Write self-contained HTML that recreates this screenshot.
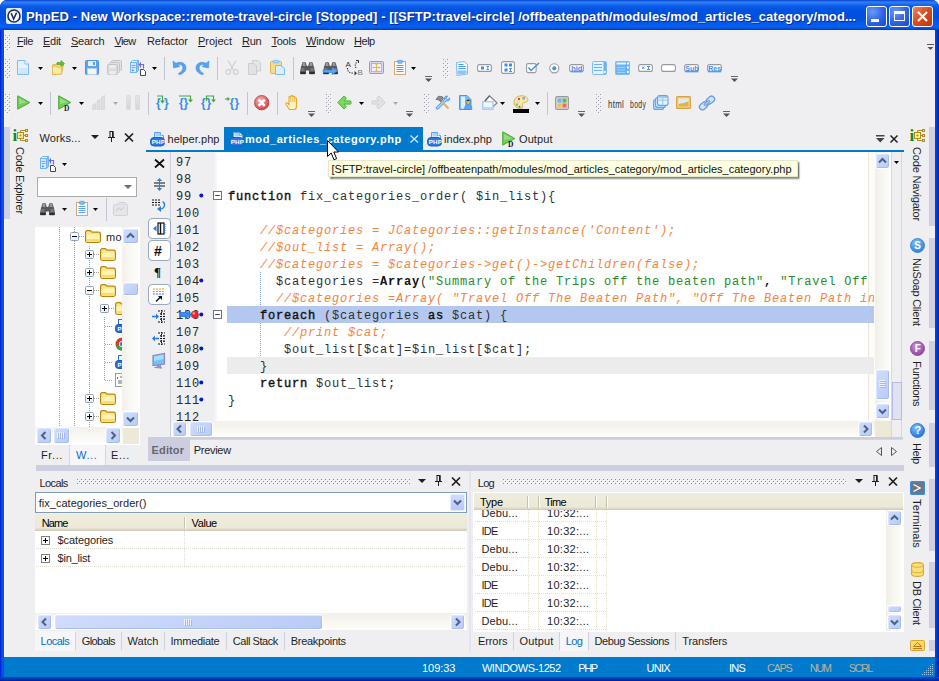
<!DOCTYPE html><html><head><meta charset="utf-8"><title>PhpED</title><style>
*{box-sizing:border-box;margin:0;padding:0}
html,body{width:939px;height:681px;overflow:hidden;background:#fff}
body{position:relative;font-family:"Liberation Sans",sans-serif;font-size:11px;color:#1e1e1e}
.a{position:absolute}
.t{position:absolute;white-space:pre;line-height:14px;height:14px;font-size:11px}
.code{position:absolute;white-space:pre;font-family:"Liberation Mono",monospace;font-size:12px;letter-spacing:.8px;line-height:17px;height:17px;color:#303030;margin-top:2px}
.cm{color:#f4843c;font-style:italic}
.st{color:#2a8a2a}
.kw{font-weight:bold;color:#111}
.k2{color:#111;-webkit-text-stroke:.4px #111}
svg{position:absolute;overflow:visible}
u{text-decoration:underline;text-underline-offset:1px}
</style></head><body>
<div class="a" style="left:0px;top:0px;width:939px;height:681px;background:linear-gradient(90deg,#0019cf 0,#0a50e6 2px,#0855e8 3px,#0048d8 4px,#0048d8 935px,#0040d0 936px,#0034c4 937.5px,#001aa6 939px);border-radius:7px 7px 0 0"></div>
<div class="a" style="left:0px;top:0px;width:939px;height:30px;background:linear-gradient(to bottom,#0840d0 0,#2f80f5 2px,#2a78f2 3px,#0a5ce8 6px,#0052e2 10px,#0050e0 18px,#0458ea 23px,#0860f2 27px,#0048d0 29px,#003cc0 30px);border-radius:7px 7px 0 0"></div>
<div class="a" style="left:4px;top:30px;width:931px;height:648px;background:#efeff2"></div>
<div class="a" style="left:4px;top:30px;width:1px;height:627px;background:#fbf8f2"></div>
<div class="a" style="left:6px;top:8px;width:16px;height:16px;background:#dfe9f7;border-radius:2px"></div>
<svg style="left:6px;top:8px" width="16" height="16" viewBox="0 0 16 16"><circle cx="8" cy="8" r="6" fill="#fff" stroke="#1c2e5a" stroke-width="1.6"/><path d="M5.2 5.2 L7.6 11 L10.6 4.6" fill="none" stroke="#1c2e5a" stroke-width="1.6"/></svg>
<div class="t" style="left:26px;top:9px;color:#fff;line-height:16px;height:16px;text-shadow:1px 1px 0 #0a2a8a;letter-spacing:0.080px;font-weight:bold;font-size:13px">PhpED - New Workspace::remote-travel-circle [Stopped] - [[SFTP:travel-circle] /offbeatenpath/modules/mod_articles_category/mod...</div>
<div class="a" style="left:866px;top:6px;width:21px;height:21px;background:radial-gradient(circle at 30% 25%,#6a98fa 0%,#2f62e6 55%,#1c48cc 100%);border:1px solid #fff;border-radius:3px"></div>
<svg style="left:866px;top:6px" width="21" height="21" viewBox="0 0 21 21"><rect x="5" y="13" width="8" height="3" fill="#fff"/></svg>
<div class="a" style="left:889px;top:6px;width:21px;height:21px;background:radial-gradient(circle at 30% 25%,#6a98fa 0%,#2f62e6 55%,#1c48cc 100%);border:1px solid #fff;border-radius:3px"></div>
<svg style="left:889px;top:6px" width="21" height="21" viewBox="0 0 21 21"><rect x="5.5" y="5.5" width="10" height="9" fill="none" stroke="#fff" stroke-width="1"/><rect x="5" y="5" width="11" height="3" fill="#fff"/></svg>
<div class="a" style="left:912px;top:6px;width:21px;height:21px;background:linear-gradient(135deg,#ee8a6a 0%,#dc4c24 45%,#c03410 100%);border:1px solid #fff;border-radius:3px"></div>
<svg style="left:912px;top:6px" width="21" height="21" viewBox="0 0 21 21"><path d="M6 6 L15 15 M15 6 L6 15" stroke="#fff" stroke-width="2.2" fill="none"/></svg>
<div class="t" style="left:17px;top:34px;;letter-spacing:-0.496px"><u>F</u>ile</div>
<div class="t" style="left:43px;top:34px;;letter-spacing:-0.277px"><u>E</u>dit</div>
<div class="t" style="left:71px;top:34px;;letter-spacing:-0.247px"><u>S</u>earch</div>
<div class="t" style="left:114.5px;top:34px;;letter-spacing:-0.616px"><u>V</u>iew</div>
<div class="t" style="left:147px;top:34px;;letter-spacing:-0.077px">Refactor</div>
<div class="t" style="left:198px;top:34px;;letter-spacing:-0.038px"><u>P</u>roject</div>
<div class="t" style="left:242px;top:34px;;letter-spacing:-0.275px"><u>R</u>un</div>
<div class="t" style="left:271.5px;top:34px;;letter-spacing:-0.264px"><u>T</u>ools</div>
<div class="t" style="left:306px;top:34px;;letter-spacing:-0.114px"><u>W</u>indow</div>
<div class="t" style="left:354px;top:34px;;letter-spacing:-0.464px"><u>H</u>elp</div>
<svg style="left:927px;top:44px" width="7" height="7" viewBox="0 0 7 7"><rect x="0" y="0" width="7" height="1" fill="#555"/><path d="M0.5 3 L6.5 3 L3.5 6 Z" fill="#555"/></svg>
<svg style="left:5px;top:35px" width="6" height="15" viewBox="0 0 6 15"><rect x="1" y="1" width="1" height="1" fill="#fff"/><rect x="5" y="1" width="1" height="1" fill="#fff"/><rect x="0" y="0" width="1" height="1" fill="#9c9ca6"/><rect x="4" y="0" width="1" height="1" fill="#9c9ca6"/><rect x="3" y="3" width="1" height="1" fill="#fff"/><rect x="2" y="2" width="1" height="1" fill="#9c9ca6"/><rect x="1" y="5" width="1" height="1" fill="#fff"/><rect x="5" y="5" width="1" height="1" fill="#fff"/><rect x="0" y="4" width="1" height="1" fill="#9c9ca6"/><rect x="4" y="4" width="1" height="1" fill="#9c9ca6"/><rect x="3" y="7" width="1" height="1" fill="#fff"/><rect x="2" y="6" width="1" height="1" fill="#9c9ca6"/><rect x="1" y="9" width="1" height="1" fill="#fff"/><rect x="5" y="9" width="1" height="1" fill="#fff"/><rect x="0" y="8" width="1" height="1" fill="#9c9ca6"/><rect x="4" y="8" width="1" height="1" fill="#9c9ca6"/><rect x="3" y="11" width="1" height="1" fill="#fff"/><rect x="2" y="10" width="1" height="1" fill="#9c9ca6"/><rect x="1" y="13" width="1" height="1" fill="#fff"/><rect x="5" y="13" width="1" height="1" fill="#fff"/><rect x="0" y="12" width="1" height="1" fill="#9c9ca6"/><rect x="4" y="12" width="1" height="1" fill="#9c9ca6"/><rect x="3" y="15" width="1" height="1" fill="#fff"/><rect x="2" y="14" width="1" height="1" fill="#9c9ca6"/></svg>
<svg style="left:5px;top:59px" width="6" height="19" viewBox="0 0 6 19"><rect x="1" y="1" width="1" height="1" fill="#fff"/><rect x="5" y="1" width="1" height="1" fill="#fff"/><rect x="0" y="0" width="1" height="1" fill="#9c9ca6"/><rect x="4" y="0" width="1" height="1" fill="#9c9ca6"/><rect x="3" y="3" width="1" height="1" fill="#fff"/><rect x="2" y="2" width="1" height="1" fill="#9c9ca6"/><rect x="1" y="5" width="1" height="1" fill="#fff"/><rect x="5" y="5" width="1" height="1" fill="#fff"/><rect x="0" y="4" width="1" height="1" fill="#9c9ca6"/><rect x="4" y="4" width="1" height="1" fill="#9c9ca6"/><rect x="3" y="7" width="1" height="1" fill="#fff"/><rect x="2" y="6" width="1" height="1" fill="#9c9ca6"/><rect x="1" y="9" width="1" height="1" fill="#fff"/><rect x="5" y="9" width="1" height="1" fill="#fff"/><rect x="0" y="8" width="1" height="1" fill="#9c9ca6"/><rect x="4" y="8" width="1" height="1" fill="#9c9ca6"/><rect x="3" y="11" width="1" height="1" fill="#fff"/><rect x="2" y="10" width="1" height="1" fill="#9c9ca6"/><rect x="1" y="13" width="1" height="1" fill="#fff"/><rect x="5" y="13" width="1" height="1" fill="#fff"/><rect x="0" y="12" width="1" height="1" fill="#9c9ca6"/><rect x="4" y="12" width="1" height="1" fill="#9c9ca6"/><rect x="3" y="15" width="1" height="1" fill="#fff"/><rect x="2" y="14" width="1" height="1" fill="#9c9ca6"/><rect x="1" y="17" width="1" height="1" fill="#fff"/><rect x="5" y="17" width="1" height="1" fill="#fff"/><rect x="0" y="16" width="1" height="1" fill="#9c9ca6"/><rect x="4" y="16" width="1" height="1" fill="#9c9ca6"/><rect x="3" y="19" width="1" height="1" fill="#fff"/><rect x="2" y="18" width="1" height="1" fill="#9c9ca6"/></svg>
<svg style="left:5px;top:94px" width="6" height="19" viewBox="0 0 6 19"><rect x="1" y="1" width="1" height="1" fill="#fff"/><rect x="5" y="1" width="1" height="1" fill="#fff"/><rect x="0" y="0" width="1" height="1" fill="#9c9ca6"/><rect x="4" y="0" width="1" height="1" fill="#9c9ca6"/><rect x="3" y="3" width="1" height="1" fill="#fff"/><rect x="2" y="2" width="1" height="1" fill="#9c9ca6"/><rect x="1" y="5" width="1" height="1" fill="#fff"/><rect x="5" y="5" width="1" height="1" fill="#fff"/><rect x="0" y="4" width="1" height="1" fill="#9c9ca6"/><rect x="4" y="4" width="1" height="1" fill="#9c9ca6"/><rect x="3" y="7" width="1" height="1" fill="#fff"/><rect x="2" y="6" width="1" height="1" fill="#9c9ca6"/><rect x="1" y="9" width="1" height="1" fill="#fff"/><rect x="5" y="9" width="1" height="1" fill="#fff"/><rect x="0" y="8" width="1" height="1" fill="#9c9ca6"/><rect x="4" y="8" width="1" height="1" fill="#9c9ca6"/><rect x="3" y="11" width="1" height="1" fill="#fff"/><rect x="2" y="10" width="1" height="1" fill="#9c9ca6"/><rect x="1" y="13" width="1" height="1" fill="#fff"/><rect x="5" y="13" width="1" height="1" fill="#fff"/><rect x="0" y="12" width="1" height="1" fill="#9c9ca6"/><rect x="4" y="12" width="1" height="1" fill="#9c9ca6"/><rect x="3" y="15" width="1" height="1" fill="#fff"/><rect x="2" y="14" width="1" height="1" fill="#9c9ca6"/><rect x="1" y="17" width="1" height="1" fill="#fff"/><rect x="5" y="17" width="1" height="1" fill="#fff"/><rect x="0" y="16" width="1" height="1" fill="#9c9ca6"/><rect x="4" y="16" width="1" height="1" fill="#9c9ca6"/><rect x="3" y="19" width="1" height="1" fill="#fff"/><rect x="2" y="18" width="1" height="1" fill="#9c9ca6"/></svg>
<svg style="left:17px;top:60px" width="12" height="15" viewBox="0 0 12 15"><path d="M0.5 0.5 H8 L11.5 4 V14.5 H0.5 Z" fill="#e4f2ff" stroke="#7dbdf5"/><path d="M8 0.5 V4 H11.5" fill="#fff" stroke="#7dbdf5"/><rect x="1.5" y="8" width="9" height="6" fill="#cfe6fb"/></svg>
<svg style="left:38px;top:67px" width="5" height="3" viewBox="0 0 5 3"><path d="M0 0 L5 0 L2.5 3 Z" fill="#000"/></svg>
<svg style="left:52px;top:60px" width="13" height="15" viewBox="0 0 13 15"><path d="M0.5 5 L9 3 L11.5 4 L9.5 14 L0.5 14.5 Z" fill="#f5d77a" stroke="#d9b145"/><path d="M0.5 6 L9.5 8 L9.5 14 L0.5 14.5Z" fill="#fbe9a6" stroke="#d9b145" stroke-width=".6"/><path d="M5 2.5 H9 V0.5 L12.5 3.5 L9 6.5 V4.5 H5 Z" fill="#5cc040" stroke="#3f9a2a" stroke-width=".6"/></svg>
<svg style="left:72px;top:67px" width="5" height="3" viewBox="0 0 5 3"><path d="M0 0 L5 0 L2.5 3 Z" fill="#000"/></svg>
<svg style="left:85px;top:60px" width="14" height="15" viewBox="0 0 14 15"><rect x="0.5" y="0.5" width="13" height="14" rx="1" fill="#5aa2f2" stroke="#4a92ea"/><rect x="3" y="1" width="8" height="5" fill="#e4f0ff"/><rect x="8" y="2" width="2" height="3" fill="#5aa2f2"/><rect x="2.5" y="8.5" width="9" height="6" fill="#f4f4f4" stroke="#cfd8e6" stroke-width=".5"/></svg>
<svg style="left:107px;top:60px" width="15" height="15" viewBox="0 0 15 15"><rect x="4.5" y="0.5" width="10" height="10" rx="1" fill="#e2e2e4" stroke="#c4c4c8"/><rect x="2.5" y="2.5" width="10" height="10" rx="1" fill="#e2e2e4" stroke="#c4c4c8"/><rect x="0.5" y="4.5" width="10" height="10" rx="1" fill="#dadadd" stroke="#c4c4c8"/><rect x="2.5" y="5" width="6" height="3.5" fill="#ececee"/><rect x="2.5" y="11" width="6" height="3.5" fill="#ececee"/></svg>
<svg style="left:130px;top:60px" width="16" height="16" viewBox="0 0 16 16"><path d="M0.5 2.5 L2.5 0.5 H8.5 L6.5 2.5 Z" fill="#f2f9ff" stroke="#6ab0f0" stroke-width=".9"/><path d="M6.5 2.5 L8.5 0.5 V10.5 L6.5 12.5 Z" fill="#8cc4f6" stroke="#6ab0f0" stroke-width=".9"/><rect x="0.5" y="2.5" width="6" height="10" fill="#d4eaff" stroke="#6ab0f0" stroke-width=".9"/><path d="M1.5 5.5 H5.5 M1.5 7.5 H5.5" stroke="#6ab0f0" stroke-width="1"/><rect x="2" y="9.5" width="1.6" height="1.6" fill="#3a8ee6"/><path d="M10.5 7.5 V4.5 H13.5 V8.5" fill="none" stroke="#7a6ad0" stroke-width="1.2"/><path d="M11 1.8 L8.6 4.5 L11 7.2 Z" fill="#7a6ad0"/><path d="M10.5 9.5 H13.5 L15.5 11.5 V15.5 H10.5 Z" fill="#fff" stroke="#445"/></svg>
<svg style="left:152px;top:67px" width="5" height="3" viewBox="0 0 5 3"><path d="M0 0 L5 0 L2.5 3 Z" fill="#000"/></svg>
<div class="a" style="left:164px;top:57px;width:1px;height:23px;background:#c3c3d4"></div>
<svg style="left:172px;top:60px" width="15" height="15" viewBox="0 0 15 15"><g ><path d="M1 1 L1.5 8 L8 6.5 L5.8 5 C8.5 3.8 11 5.5 10.8 8.2 C10.6 10.5 9 12.2 6.2 13.6 L7.6 14.8 C11.5 13.6 14.2 11 14 7.6 C13.8 3.4 9.2 0.6 4 3.2 Z" fill="#55a2ee" stroke="#3a8ae0" stroke-width=".5"/></g></svg>
<svg style="left:195px;top:60px" width="15" height="15" viewBox="0 0 15 15"><g transform="translate(15,0) scale(-1,1)"><path d="M1 1 L1.5 8 L8 6.5 L5.8 5 C8.5 3.8 11 5.5 10.8 8.2 C10.6 10.5 9 12.2 6.2 13.6 L7.6 14.8 C11.5 13.6 14.2 11 14 7.6 C13.8 3.4 9.2 0.6 4 3.2 Z" fill="#55a2ee" stroke="#3a8ae0" stroke-width=".5"/></g></svg>
<div class="a" style="left:217px;top:57px;width:1px;height:23px;background:#c3c3d4"></div>
<svg style="left:225px;top:60px" width="14" height="15" viewBox="0 0 14 15"><path d="M3 0.5 L8.5 10 M11 0.5 L5.5 10" stroke="#d0d0d4" stroke-width="1.3" fill="none"/><circle cx="3.2" cy="12" r="2.3" fill="none" stroke="#d0d0d4" stroke-width="1.2"/><circle cx="10.8" cy="12" r="2.3" fill="none" stroke="#d0d0d4" stroke-width="1.2"/></svg>
<svg style="left:248px;top:60px" width="14" height="15" viewBox="0 0 14 15"><path d="M4.5 0.5 H10 L12.5 3 V11 H4.5 Z" fill="#e6e6e8" stroke="#cdcdd0"/><path d="M0.5 3.5 H6 L8.5 6 V14.5 H0.5 Z" fill="#e2e2e5" stroke="#cdcdd0"/></svg>
<svg style="left:270px;top:60px" width="15" height="15" viewBox="0 0 15 15"><rect x="0.5" y="1.5" width="11" height="12" rx="1" fill="#f7dc8c" stroke="#dcb24c"/><rect x="3" y="0.3" width="6" height="2.6" rx="1" fill="#a8d4ff" stroke="#7dbdf5" stroke-width=".8"/><path d="M5.5 5.5 H11 L14.5 8.5 V14.5 H5.5 Z" fill="#dcedff" stroke="#7dbdf5"/></svg>
<div class="a" style="left:293px;top:57px;width:1px;height:23px;background:#c3c3d4"></div>
<svg style="left:300px;top:61px" width="15" height="14" viewBox="0 0 15 14"><path d="M1 6 L2.6 1.2 H5.6 L6.8 5 H8.2 L9.4 1.2 H12.4 L14 6 L15 11 V13 H9 V9.5 H6 V13 H0 V11 Z" fill="#58585c"/><path d="M3 2 H5 L5.5 5 H2.5Z M10 2 H12 L12.5 5 H9.5 Z" fill="#9c9ca0"/><path d="M1.5 7 H4.5 V10 H1 Z M10.5 7 H13.5 L14 10 H10.5 Z" fill="#77777b"/><rect x="0.5" y="11" width="5" height="2.2" fill="#2e2e30"/><rect x="9.5" y="11" width="5" height="2.2" fill="#2e2e30"/></svg>
<svg style="left:323px;top:61px" width="15" height="14" viewBox="0 0 15 14"><path d="M1 6 L2.6 1.2 H5.6 L6.8 5 H8.2 L9.4 1.2 H12.4 L14 6 L15 11 V13 H9 V9.5 H6 V13 H0 V11 Z" fill="#58585c"/><path d="M3 2 H5 L5.5 5 H2.5Z M10 2 H12 L12.5 5 H9.5 Z" fill="#9c9ca0"/><path d="M1.5 7 H4.5 V10 H1 Z M10.5 7 H13.5 L14 10 H10.5 Z" fill="#77777b"/><rect x="0.5" y="11" width="5" height="2.2" fill="#2e2e30"/><rect x="9.5" y="11" width="5" height="2.2" fill="#2e2e30"/><path d="M0 9 H9 V6.5 L15 10 L9 13.5 V11.5 H0 Z" fill="#59a7f2" stroke="#2f80dc" stroke-width=".6"/></svg>
<svg style="left:345px;top:60px" width="18" height="16" viewBox="0 0 18 16"><text x="0.5" y="6.5" font-family="Liberation Sans,sans-serif" font-size="8" fill="#333">A</text><text x="12.5" y="15" font-family="Liberation Sans,sans-serif" font-size="8" fill="#777">B</text><path d="M2.5 8 C2.5 12 5 13.2 9 13.2" fill="none" stroke="#333" stroke-width="1.2" stroke-dasharray="1.2 1.2"/><path d="M9.5 11 L12 13.2 L9.5 15.4 Z" fill="#333"/><path d="M11 8 C9.5 5 10.5 3 12.5 1.5" fill="none" stroke="#333" stroke-width="1.1" stroke-dasharray="1.2 1.2"/><path d="M11 0.5 H13.5 V3" fill="none" stroke="#333" stroke-width="1"/></svg>
<svg style="left:369px;top:61px" width="15" height="13" viewBox="0 0 15 13"><rect x="0.5" y="0.5" width="14" height="12" rx="1" fill="#d9d6ee" stroke="#9d96c8"/><rect x="2.5" y="2.5" width="10" height="8" fill="#f0f0ff" stroke="#aca6d4" stroke-width=".8"/><path d="M7.5 3 V10 M4 6.5 H11" stroke="#e8b93c" stroke-width="1.2"/><path d="M7.5 2.4 L6.2 4 H8.8Z M7.5 10.6 L6.2 9 H8.8Z M3.4 6.5 L5 5.2 V7.8Z M11.6 6.5 L10 5.2 V7.8Z" fill="#e8b93c"/></svg>
<svg style="left:394px;top:60px" width="12" height="15" viewBox="0 0 12 15"><rect x="0.5" y="1.5" width="11" height="13" fill="#f8fbff" stroke="#d6a878"/><path d="M2.5 5.5 H9.5 M2.5 7.5 H9.5 M2.5 9.5 H9.5 M2.5 11.5 H9.5" stroke="#5aa2ea" stroke-width="1"/><rect x="3.5" y="0.3" width="5" height="3" rx="1.2" fill="#7dbdf5" stroke="#4a96e6" stroke-width=".7"/></svg>
<svg style="left:411px;top:67px" width="5" height="3" viewBox="0 0 5 3"><path d="M0 0 L5 0 L2.5 3 Z" fill="#000"/></svg>
<svg style="left:425px;top:76px" width="7" height="7" viewBox="0 0 7 7"><rect x="0" y="0" width="7" height="1" fill="#666"/><path d="M0 2.5 L7 2.5 L3.5 6 Z" fill="#555"/></svg>
<svg style="left:443px;top:59px" width="6" height="19" viewBox="0 0 6 19"><rect x="1" y="1" width="1" height="1" fill="#fff"/><rect x="5" y="1" width="1" height="1" fill="#fff"/><rect x="0" y="0" width="1" height="1" fill="#9c9ca6"/><rect x="4" y="0" width="1" height="1" fill="#9c9ca6"/><rect x="3" y="3" width="1" height="1" fill="#fff"/><rect x="2" y="2" width="1" height="1" fill="#9c9ca6"/><rect x="1" y="5" width="1" height="1" fill="#fff"/><rect x="5" y="5" width="1" height="1" fill="#fff"/><rect x="0" y="4" width="1" height="1" fill="#9c9ca6"/><rect x="4" y="4" width="1" height="1" fill="#9c9ca6"/><rect x="3" y="7" width="1" height="1" fill="#fff"/><rect x="2" y="6" width="1" height="1" fill="#9c9ca6"/><rect x="1" y="9" width="1" height="1" fill="#fff"/><rect x="5" y="9" width="1" height="1" fill="#fff"/><rect x="0" y="8" width="1" height="1" fill="#9c9ca6"/><rect x="4" y="8" width="1" height="1" fill="#9c9ca6"/><rect x="3" y="11" width="1" height="1" fill="#fff"/><rect x="2" y="10" width="1" height="1" fill="#9c9ca6"/><rect x="1" y="13" width="1" height="1" fill="#fff"/><rect x="5" y="13" width="1" height="1" fill="#fff"/><rect x="0" y="12" width="1" height="1" fill="#9c9ca6"/><rect x="4" y="12" width="1" height="1" fill="#9c9ca6"/><rect x="3" y="15" width="1" height="1" fill="#fff"/><rect x="2" y="14" width="1" height="1" fill="#9c9ca6"/><rect x="1" y="17" width="1" height="1" fill="#fff"/><rect x="5" y="17" width="1" height="1" fill="#fff"/><rect x="0" y="16" width="1" height="1" fill="#9c9ca6"/><rect x="4" y="16" width="1" height="1" fill="#9c9ca6"/><rect x="3" y="19" width="1" height="1" fill="#fff"/><rect x="2" y="18" width="1" height="1" fill="#9c9ca6"/></svg>
<svg style="left:456px;top:61px" width="12" height="15" viewBox="0 0 12 15"><path d="M0.5 1.5 L8 0.5 L11.5 3.5 V13 L1 14.5 Z" fill="#f2f9ff" stroke="#7dbdf5"/><path d="M2.5 3.5 H7.5 M2.5 5.5 H9.5 M2.5 7.5 H9.5" stroke="#4a9aea" stroke-width="1"/><path d="M1.5 9.5 H10.5 V12.6 L1.8 13.6 Z" fill="#8cc4f6"/></svg>
<svg style="left:477px;top:64px" width="15" height="8" viewBox="0 0 15 8"><rect x="0.6" y="0.6" width="13.8" height="6.8" rx="2" fill="#fff" stroke="#9a9a9e" stroke-width="1.1"/><rect x="4" y="2.5" width="3" height="3" fill="#3a8ee6"/><path d="M9.5 2.5 H12 M10.75 2.5 V5.5 M9.5 5.5 H12" stroke="#3a8ee6" stroke-width=".9" fill="none"/></svg>
<svg style="left:501px;top:61px" width="14" height="13" viewBox="0 0 14 13"><rect x="0.6" y="0.6" width="12.8" height="11.8" rx="2" fill="#fff" stroke="#9a9a9e" stroke-width="1.1"/><rect x="3.5" y="2.5" width="3" height="3" fill="#3a8ee6"/><rect x="8" y="2.5" width="3" height="3" fill="#3a8ee6"/><rect x="3.5" y="7.5" width="3" height="3" fill="#3a8ee6"/><path d="M8 7.5 H11 M9.5 7.5 V10.5 M8 10.5 H11" stroke="#3a8ee6" stroke-width=".9"/></svg>
<svg style="left:526px;top:62px" width="14" height="12" viewBox="0 0 14 12"><rect x="0.6" y="1.6" width="9.5" height="9" rx="1.5" fill="#fff" stroke="#9a9a9e" stroke-width="1.1"/><path d="M2.5 5.5 L5 8.5 L13 1" fill="none" stroke="#3a8ee6" stroke-width="1.4"/></svg>
<svg style="left:549px;top:63px" width="11" height="11" viewBox="0 0 11 11"><circle cx="5.3" cy="5.3" r="4.6" fill="#fff" stroke="#9a9a9e" stroke-width="1.1"/><circle cx="5.3" cy="5.3" r="2" fill="#3a8ee6"/></svg>
<svg style="left:569px;top:64px" width="15" height="8" viewBox="0 0 15 8"><rect x="0.6" y="0.6" width="13.8" height="6.8" rx="2" fill="#fff" stroke="#9a9a9e" stroke-width="1.1"/><text x="2.2" y="6.6" font-family="Liberation Sans,sans-serif" font-size="7.5" font-weight="bold" fill="#3a8ee6" text-decoration="underline">hid</text></svg>
<svg style="left:592px;top:61px" width="15" height="14" viewBox="0 0 15 14"><rect x="0.5" y="0.5" width="14" height="13" rx="1" fill="#e4f2ff" stroke="#7dbdf5"/><path d="M2 3.5 H10 M2 6.5 H10 M2 9.5 H10" stroke="#6ab2f2" stroke-width="1.2"/><rect x="11.5" y="1" width="2.5" height="12" fill="#6ab2f2"/><rect x="12" y="10" width="1.6" height="2" fill="#fff"/></svg>
<svg style="left:615px;top:61px" width="15" height="14" viewBox="0 0 15 14"><rect x="0.5" y="0.5" width="14" height="13" rx="1" fill="#6ab4f5" stroke="#7dbdf5"/><rect x="1.5" y="1.5" width="9.5" height="2" fill="#e4f2ff"/><path d="M2 6.5 H10 M2 9 H10 M2 11.5 H10" stroke="#9fd0fa" stroke-width="1"/><rect x="12" y="1.5" width="1.8" height="2" fill="#fff"/><rect x="12" y="5.5" width="1.8" height="2" fill="#fff"/><rect x="12" y="10" width="1.8" height="2" fill="#fff"/></svg>
<svg style="left:638px;top:64px" width="15" height="8" viewBox="0 0 15 8"><rect x="0.6" y="0.6" width="13.8" height="6.8" rx="2" fill="#fff" stroke="#9a9a9e" stroke-width="1.1"/><path d="M4 2.5 L6.4 5 M6.4 2.5 L4 5" stroke="#3a8ee6" stroke-width=".9"/><path d="M9 2.5 H12 M10.5 2.5 V5.5 M9 5.5 H12" stroke="#3a8ee6" stroke-width=".9" fill="none"/></svg>
<svg style="left:661px;top:64px" width="15" height="8" viewBox="0 0 15 8"><rect x="0.6" y="0.6" width="13.8" height="6.8" rx="2" fill="#fff" stroke="#9a9a9e" stroke-width="1.1"/></svg>
<svg style="left:684px;top:64px" width="15" height="8" viewBox="0 0 15 8"><rect x="0.6" y="0.6" width="13.8" height="6.8" rx="2" fill="#fff" stroke="#9a9a9e" stroke-width="1.1"/><text x="1.3" y="6.6" font-family="Liberation Sans,sans-serif" font-size="7" font-weight="bold" fill="#3a8ee6" text-decoration="underline">Sub</text></svg>
<svg style="left:707px;top:64px" width="15" height="8" viewBox="0 0 15 8"><rect x="0.6" y="0.6" width="13.8" height="6.8" rx="2" fill="#fff" stroke="#9a9a9e" stroke-width="1.1"/><text x="1.3" y="6.6" font-family="Liberation Sans,sans-serif" font-size="7" font-weight="bold" fill="#3a8ee6" text-decoration="underline">Res</text></svg>
<svg style="left:731px;top:76px" width="7" height="7" viewBox="0 0 7 7"><rect x="0" y="0" width="7" height="1" fill="#666"/><path d="M0 2.5 L7 2.5 L3.5 6 Z" fill="#555"/></svg>
<svg style="left:17px;top:95px" width="14" height="15" viewBox="0 0 14 15"><path d="M0.7 0.8 L12.8 7.5 L0.7 14.2 Z" fill="#6fcf57" stroke="#49aa36" stroke-width="1"/><path d="M2 3 L9.8 7.3 L2 9 Z" fill="#a6e294" opacity=".7"/></svg>
<svg style="left:38px;top:102px" width="5" height="3" viewBox="0 0 5 3"><path d="M0 0 L5 0 L2.5 3 Z" fill="#000"/></svg>
<div class="a" style="left:50px;top:92px;width:1px;height:23px;background:#c3c3d4"></div>
<svg style="left:58px;top:95px" width="14" height="15" viewBox="0 0 14 15"><path d="M0.7 0.8 L12.8 7.5 L0.7 14.2 Z" fill="#6fcf57" stroke="#49aa36" stroke-width="1"/><path d="M2 3 L9.8 7.3 L2 9 Z" fill="#a6e294" opacity=".7"/><text x="6" y="15.5" font-family="Liberation Serif,serif" font-weight="bold" font-size="7.5" fill="#222">D</text></svg>
<svg style="left:79px;top:102px" width="5" height="3" viewBox="0 0 5 3"><path d="M0 0 L5 0 L2.5 3 Z" fill="#000"/></svg>
<svg style="left:92px;top:95px" width="14" height="15" viewBox="0 0 14 15"><path d="M0.5 10 L3.5 8.5 V14.5 H0.5Z M5 6 L8 4.5 V14.5 H5Z M9.5 2 L12.5 0.5 V14.5 H9.5 Z" fill="#dedee0" stroke="#cfcfd3" stroke-width=".6"/></svg>
<svg style="left:113px;top:102px" width="5" height="3" viewBox="0 0 5 3"><path d="M0 0 L5 0 L2.5 3 Z" fill="#a8a8ac"/></svg>
<div class="a" style="left:126px;top:95px;width:5px;height:15px;background:linear-gradient(#e4e4e6,#d6d6d9);border:1px solid #dcdcdf;border-radius:1px"></div>
<div class="a" style="left:135px;top:95px;width:5px;height:15px;background:linear-gradient(#e4e4e6,#d6d6d9);border:1px solid #dcdcdf;border-radius:1px"></div>
<div class="a" style="left:148px;top:92px;width:1px;height:23px;background:#c3c3d4"></div>
<svg style="left:156px;top:95px" width="16" height="15" viewBox="0 0 16 15"><text x="0" y="12" font-family="Liberation Sans,sans-serif" font-size="12" font-weight="bold" fill="#3a8ee6">{</text><text x="8" y="12" font-family="Liberation Sans,sans-serif" font-size="12" font-weight="bold" fill="#3a8ee6">}</text><path d="M1 1 H6.5 V6" fill="none" stroke="#49a83a" stroke-width="1.2"/><path d="M4 5.5 H9 L6.5 8.5 Z" fill="#49a83a"/></svg>
<svg style="left:179px;top:95px" width="16" height="15" viewBox="0 0 16 15"><text x="0" y="12" font-family="Liberation Sans,sans-serif" font-size="12" font-weight="bold" fill="#3a8ee6">{</text><text x="4.5" y="12" font-family="Liberation Sans,sans-serif" font-size="12" font-weight="bold" fill="#3a8ee6">}</text><path d="M0 1 H11.5 V5" fill="none" stroke="#49a83a" stroke-width="1.2"/><path d="M9 4.5 H14 L11.5 7.5 Z" fill="#49a83a"/></svg>
<svg style="left:201px;top:95px" width="16" height="15" viewBox="0 0 16 15"><text x="0" y="12" font-family="Liberation Sans,sans-serif" font-size="12" font-weight="bold" fill="#3a8ee6">{</text><text x="5.5" y="12" font-family="Liberation Sans,sans-serif" font-size="12" font-weight="bold" fill="#3a8ee6">}</text><path d="M5.5 6 V1 H12.5 V5" fill="none" stroke="#49a83a" stroke-width="1.2"/><path d="M10 4.5 H15 L12.5 7.5 Z" fill="#49a83a"/></svg>
<svg style="left:225px;top:95px" width="16" height="15" viewBox="0 0 16 15"><text x="4.5" y="12" font-family="Liberation Sans,sans-serif" font-size="12" font-weight="bold" fill="#3a8ee6">{</text><text x="9.5" y="12" font-family="Liberation Sans,sans-serif" font-size="12" font-weight="bold" fill="#3a8ee6">}</text><path d="M0 4 H3" stroke="#49a83a" stroke-width="1.2"/><path d="M2.5 1.8 L5 4 L2.5 6.2 Z" fill="#49a83a"/></svg>
<div class="a" style="left:247px;top:92px;width:1px;height:23px;background:#c3c3d4"></div>
<svg style="left:254px;top:95px" width="16" height="16" viewBox="0 0 16 16"><defs><radialGradient id="rg1" cx=".4" cy=".35" r=".7"><stop offset="0" stop-color="#f8b8b8"/><stop offset="1" stop-color="#cc3c44"/></radialGradient></defs><circle cx="7.7" cy="7.7" r="7.2" fill="url(#rg1)" stroke="#b83a40" stroke-width=".8"/><path d="M4.6 4.6 L10.8 10.8 M10.8 4.6 L4.6 10.8" stroke="#fff" stroke-width="2.6"/></svg>
<div class="a" style="left:277px;top:92px;width:1px;height:23px;background:#c3c3d4"></div>
<svg style="left:285px;top:95px" width="14" height="15" viewBox="0 0 14 15"><path d="M4.5 14.5 L1 9.5 C0 8 1.5 7.2 2.6 8.2 L4 9.6 V2.4 C4 1.2 5.8 1.2 5.8 2.4 V1.4 C5.8 0.2 7.8 0.2 7.8 1.4 V2 C7.8 0.9 9.7 0.9 9.7 2 V3.4 C9.7 2.4 11.5 2.4 11.5 3.6 V11 C11.5 13 10.5 14.5 9.5 14.5 Z" fill="#fff3c4" stroke="#e2a82c" stroke-width="1.1"/><path d="M5.8 2.4 V7 M7.8 2 V7 M9.7 3.4 V7" stroke="#e2a82c" stroke-width=".8"/></svg>
<svg style="left:308px;top:111px" width="7" height="7" viewBox="0 0 7 7"><rect x="0" y="0" width="7" height="1" fill="#666"/><path d="M0 2.5 L7 2.5 L3.5 6 Z" fill="#555"/></svg>
<svg style="left:326px;top:94px" width="6" height="19" viewBox="0 0 6 19"><rect x="1" y="1" width="1" height="1" fill="#fff"/><rect x="5" y="1" width="1" height="1" fill="#fff"/><rect x="0" y="0" width="1" height="1" fill="#9c9ca6"/><rect x="4" y="0" width="1" height="1" fill="#9c9ca6"/><rect x="3" y="3" width="1" height="1" fill="#fff"/><rect x="2" y="2" width="1" height="1" fill="#9c9ca6"/><rect x="1" y="5" width="1" height="1" fill="#fff"/><rect x="5" y="5" width="1" height="1" fill="#fff"/><rect x="0" y="4" width="1" height="1" fill="#9c9ca6"/><rect x="4" y="4" width="1" height="1" fill="#9c9ca6"/><rect x="3" y="7" width="1" height="1" fill="#fff"/><rect x="2" y="6" width="1" height="1" fill="#9c9ca6"/><rect x="1" y="9" width="1" height="1" fill="#fff"/><rect x="5" y="9" width="1" height="1" fill="#fff"/><rect x="0" y="8" width="1" height="1" fill="#9c9ca6"/><rect x="4" y="8" width="1" height="1" fill="#9c9ca6"/><rect x="3" y="11" width="1" height="1" fill="#fff"/><rect x="2" y="10" width="1" height="1" fill="#9c9ca6"/><rect x="1" y="13" width="1" height="1" fill="#fff"/><rect x="5" y="13" width="1" height="1" fill="#fff"/><rect x="0" y="12" width="1" height="1" fill="#9c9ca6"/><rect x="4" y="12" width="1" height="1" fill="#9c9ca6"/><rect x="3" y="15" width="1" height="1" fill="#fff"/><rect x="2" y="14" width="1" height="1" fill="#9c9ca6"/><rect x="1" y="17" width="1" height="1" fill="#fff"/><rect x="5" y="17" width="1" height="1" fill="#fff"/><rect x="0" y="16" width="1" height="1" fill="#9c9ca6"/><rect x="4" y="16" width="1" height="1" fill="#9c9ca6"/><rect x="3" y="19" width="1" height="1" fill="#fff"/><rect x="2" y="18" width="1" height="1" fill="#9c9ca6"/></svg>
<svg style="left:337px;top:95px" width="15" height="15" viewBox="0 0 15 15"><g ><path d="M0.8 7.5 L7 1 L9.4 3.2 L7 5.9 H13.2 C14.6 5.9 14.6 9.1 13.2 9.1 H7 L9.4 11.8 L7 14 Z" fill="#7ad95e" stroke="#4cb436" stroke-width="1" stroke-linejoin="round"/></g></svg>
<svg style="left:359px;top:102px" width="5" height="3" viewBox="0 0 5 3"><path d="M0 0 L5 0 L2.5 3 Z" fill="#000"/></svg>
<svg style="left:371px;top:95px" width="15" height="15" viewBox="0 0 15 15"><g transform="translate(15,0) scale(-1,1)"><path d="M0.8 7.5 L7 1 L9.4 3.2 L7 5.9 H13.2 C14.6 5.9 14.6 9.1 13.2 9.1 H7 L9.4 11.8 L7 14 Z" fill="#e2e2e4" stroke="#d0d0d4" stroke-width="1" stroke-linejoin="round"/></g></svg>
<svg style="left:393px;top:102px" width="5" height="3" viewBox="0 0 5 3"><path d="M0 0 L5 0 L2.5 3 Z" fill="#a8a8ac"/></svg>
<svg style="left:406px;top:111px" width="7" height="7" viewBox="0 0 7 7"><rect x="0" y="0" width="7" height="1" fill="#666"/><path d="M0 2.5 L7 2.5 L3.5 6 Z" fill="#555"/></svg>
<svg style="left:424px;top:94px" width="6" height="19" viewBox="0 0 6 19"><rect x="1" y="1" width="1" height="1" fill="#fff"/><rect x="5" y="1" width="1" height="1" fill="#fff"/><rect x="0" y="0" width="1" height="1" fill="#9c9ca6"/><rect x="4" y="0" width="1" height="1" fill="#9c9ca6"/><rect x="3" y="3" width="1" height="1" fill="#fff"/><rect x="2" y="2" width="1" height="1" fill="#9c9ca6"/><rect x="1" y="5" width="1" height="1" fill="#fff"/><rect x="5" y="5" width="1" height="1" fill="#fff"/><rect x="0" y="4" width="1" height="1" fill="#9c9ca6"/><rect x="4" y="4" width="1" height="1" fill="#9c9ca6"/><rect x="3" y="7" width="1" height="1" fill="#fff"/><rect x="2" y="6" width="1" height="1" fill="#9c9ca6"/><rect x="1" y="9" width="1" height="1" fill="#fff"/><rect x="5" y="9" width="1" height="1" fill="#fff"/><rect x="0" y="8" width="1" height="1" fill="#9c9ca6"/><rect x="4" y="8" width="1" height="1" fill="#9c9ca6"/><rect x="3" y="11" width="1" height="1" fill="#fff"/><rect x="2" y="10" width="1" height="1" fill="#9c9ca6"/><rect x="1" y="13" width="1" height="1" fill="#fff"/><rect x="5" y="13" width="1" height="1" fill="#fff"/><rect x="0" y="12" width="1" height="1" fill="#9c9ca6"/><rect x="4" y="12" width="1" height="1" fill="#9c9ca6"/><rect x="3" y="15" width="1" height="1" fill="#fff"/><rect x="2" y="14" width="1" height="1" fill="#9c9ca6"/><rect x="1" y="17" width="1" height="1" fill="#fff"/><rect x="5" y="17" width="1" height="1" fill="#fff"/><rect x="0" y="16" width="1" height="1" fill="#9c9ca6"/><rect x="4" y="16" width="1" height="1" fill="#9c9ca6"/><rect x="3" y="19" width="1" height="1" fill="#fff"/><rect x="2" y="18" width="1" height="1" fill="#9c9ca6"/></svg>
<svg style="left:435px;top:95px" width="16" height="16" viewBox="0 0 16 16"><path d="M12.5 1 C10.5 0.6 9 2.4 9.8 4.2 L1.4 12.2 C0.4 13.2 2 15 3.2 14 L11.4 5.8 C13.4 6.6 15.2 5 14.6 3 L12.6 4.8 L11 3.2 Z" fill="#9fd0ff" stroke="#3a8ee6" stroke-width=".9"/><path d="M4 4 L13.5 13.5" stroke="#e8b060" stroke-width="2.2"/><path d="M1 4.5 L3.5 1.2 L7.5 1.8 L8.5 4 L5.5 6.8 L4.6 5 Z" fill="#8c8c90" stroke="#5a5a5e" stroke-width=".7"/></svg>
<svg style="left:459px;top:95px" width="14" height="15" viewBox="0 0 14 15"><path d="M0.5 0.5 H8 L12 4.5 V14.5 H0.5 Z" fill="#7dbdf5" stroke="#4a9ae8"/><rect x="2" y="1.5" width="4" height="12" fill="#dff0ff"/><circle cx="9.2" cy="7" r="2.2" fill="#f2c46a" stroke="#444" stroke-width=".5"/><path d="M8 4.8 H10.4 V6.2 H8Z" fill="#333"/><path d="M5.5 14.5 C5.5 10.5 7.5 9.5 9.2 9.5 C11 9.5 13 10.5 13 14.5 Z" fill="#5aa6f0" stroke="#3a86da" stroke-width=".6"/></svg>
<svg style="left:482px;top:95px" width="16" height="15" viewBox="0 0 16 15"><path d="M7.5 0.8 L15 8 L9.5 13 L3 6 Z" fill="#fff" stroke="#8a8a8e" stroke-width="1.3"/><path d="M7.5 0.8 L3 6" stroke="#666" stroke-width="1.2"/><path d="M0.8 6.8 H11 V14.2 H0.8 Z" fill="#eef6ff" stroke="#8fc2f2" stroke-width="1.1"/><path d="M1.5 12 H10.5 V13.8 H1.5Z" fill="#b8d8f8"/></svg>
<svg style="left:500px;top:102px" width="5" height="3" viewBox="0 0 5 3"><path d="M0 0 L5 0 L2.5 3 Z" fill="#000"/></svg>
<svg style="left:513px;top:95px" width="16" height="18" viewBox="0 0 16 18"><path d="M8 0.8 C12.5 0.4 15.4 3 14.8 5.6 C14.2 8 10.5 6.6 9.4 8.6 C8.6 10.2 10.8 11.6 9 13 C6.6 14.6 1 12.6 1 7.4 C1 3.6 4 1.2 8 0.8 Z" fill="#fbeaa6" stroke="#dcb040" stroke-width="1"/><rect x="5" y="3" width="2" height="2" fill="#e04040"/><rect x="9.4" y="2" width="2.6" height="2.6" fill="#6ab4f5"/><rect x="2.8" y="8.6" width="2" height="2" fill="#5cc050"/><rect x="5.6" y="10.8" width="1.8" height="1.8" fill="#666"/><circle cx="5.4" cy="7" r="1" fill="#fff" stroke="#999" stroke-width=".4"/><rect x="0" y="14" width="16" height="4" fill="#000"/></svg>
<svg style="left:535px;top:102px" width="5" height="3" viewBox="0 0 5 3"><path d="M0 0 L5 0 L2.5 3 Z" fill="#000"/></svg>
<div class="a" style="left:547px;top:92px;width:1px;height:23px;background:#c3c3d4"></div>
<svg style="left:555px;top:96px" width="14" height="14" viewBox="0 0 14 14"><rect x="0.6" y="0.6" width="12.8" height="12.8" rx="1.5" fill="#d8d8da" stroke="#98989c" stroke-width="1.1"/><rect x="2.5" y="2.5" width="4" height="4" fill="#6cb6f2"/><rect x="7.5" y="2.5" width="4" height="4" fill="#58c058"/><rect x="2.5" y="7.5" width="4" height="4" fill="#f0c050"/><rect x="7.5" y="7.5" width="4" height="4" fill="#f07048"/></svg>
<svg style="left:578px;top:111px" width="7" height="7" viewBox="0 0 7 7"><rect x="0" y="0" width="7" height="1" fill="#666"/><path d="M0 2.5 L7 2.5 L3.5 6 Z" fill="#555"/></svg>
<svg style="left:596px;top:94px" width="6" height="19" viewBox="0 0 6 19"><rect x="1" y="1" width="1" height="1" fill="#fff"/><rect x="5" y="1" width="1" height="1" fill="#fff"/><rect x="0" y="0" width="1" height="1" fill="#9c9ca6"/><rect x="4" y="0" width="1" height="1" fill="#9c9ca6"/><rect x="3" y="3" width="1" height="1" fill="#fff"/><rect x="2" y="2" width="1" height="1" fill="#9c9ca6"/><rect x="1" y="5" width="1" height="1" fill="#fff"/><rect x="5" y="5" width="1" height="1" fill="#fff"/><rect x="0" y="4" width="1" height="1" fill="#9c9ca6"/><rect x="4" y="4" width="1" height="1" fill="#9c9ca6"/><rect x="3" y="7" width="1" height="1" fill="#fff"/><rect x="2" y="6" width="1" height="1" fill="#9c9ca6"/><rect x="1" y="9" width="1" height="1" fill="#fff"/><rect x="5" y="9" width="1" height="1" fill="#fff"/><rect x="0" y="8" width="1" height="1" fill="#9c9ca6"/><rect x="4" y="8" width="1" height="1" fill="#9c9ca6"/><rect x="3" y="11" width="1" height="1" fill="#fff"/><rect x="2" y="10" width="1" height="1" fill="#9c9ca6"/><rect x="1" y="13" width="1" height="1" fill="#fff"/><rect x="5" y="13" width="1" height="1" fill="#fff"/><rect x="0" y="12" width="1" height="1" fill="#9c9ca6"/><rect x="4" y="12" width="1" height="1" fill="#9c9ca6"/><rect x="3" y="15" width="1" height="1" fill="#fff"/><rect x="2" y="14" width="1" height="1" fill="#9c9ca6"/><rect x="1" y="17" width="1" height="1" fill="#fff"/><rect x="5" y="17" width="1" height="1" fill="#fff"/><rect x="0" y="16" width="1" height="1" fill="#9c9ca6"/><rect x="4" y="16" width="1" height="1" fill="#9c9ca6"/><rect x="3" y="19" width="1" height="1" fill="#fff"/><rect x="2" y="18" width="1" height="1" fill="#9c9ca6"/></svg>
<div class="t" style="left:607.5px;top:97px;font-size:11.5px;transform:scaleX(.68);transform-origin:0 0;color:#333;letter-spacing:.5px">html</div>
<div class="t" style="left:630px;top:97px;font-size:11.5px;transform:scaleX(.6);transform-origin:0 0;color:#333;letter-spacing:.5px">body</div>
<svg style="left:653px;top:95px" width="16" height="15" viewBox="0 0 16 15"><rect x="0.6" y="4.6" width="10" height="9.8" rx="2" fill="#b8dcff" stroke="#5aa6ee" stroke-width="1.1"/><rect x="2.6" y="2.6" width="10" height="9.8" rx="2" fill="#cfe8ff" stroke="#5aa6ee" stroke-width="1.1"/><rect x="4.6" y="0.6" width="10.4" height="9.8" rx="2" fill="#e4f3ff" stroke="#5aa6ee" stroke-width="1.1"/><path d="M9.8 2 V9.5 M5.5 5 H14" stroke="#8cc4f6" stroke-width="1"/><rect x="5.2" y="1.2" width="9.2" height="1.6" fill="#8cc4f6"/><rect x="12.2" y="1.2" width="1.5" height="1.2" fill="#f0a040"/></svg>
<svg style="left:676px;top:96px" width="15" height="13" viewBox="0 0 15 13"><rect x="0.6" y="0.6" width="13.8" height="11.8" rx="1" fill="#f6d070" stroke="#d8a040" stroke-width="1.1"/><rect x="2.5" y="2.5" width="10" height="8" fill="#d4ecff"/><path d="M2.5 8.5 C5 6.5 7 8 9 6.5 C10.5 5.5 11.5 6 12.5 5.5 V10.5 H2.5 Z" fill="#e4b040"/></svg>
<svg style="left:699px;top:95px" width="16" height="16" viewBox="0 0 16 16"><g transform="rotate(-40 8 8)"><rect x="-1" y="5" width="9" height="6" rx="3" fill="#cfe4fa" stroke="#6a9ee0" stroke-width="1.3"/><rect x="8" y="5" width="9" height="6" rx="3" fill="#cfe4fa" stroke="#6a9ee0" stroke-width="1.3"/><rect x="4.5" y="6.8" width="7" height="2.4" rx="1.2" fill="#9cc4f0" stroke="#5a8ed0" stroke-width=".7"/></g></svg>
<svg style="left:723px;top:111px" width="7" height="7" viewBox="0 0 7 7"><rect x="0" y="0" width="7" height="1" fill="#666"/><path d="M0 2.5 L7 2.5 L3.5 6 Z" fill="#555"/></svg>
<div class="a" style="left:4px;top:127px;width:6px;height:92px;background:#cfd0e2"></div>
<svg style="left:13px;top:128px" width="16" height="15" viewBox="0 0 16 15"><text x="-0.6" y="13" font-family="Liberation Serif,serif" font-weight="bold" font-size="17" fill="#0a8c1c">i</text><path d="M7.5 4.5 V2.5 H12.5 M7.5 10.5 V12.5 H12.5 M10.5 7.5 H12.5" fill="none" stroke="#b08a2a" stroke-width="1"/><rect x="4.5" y="4.5" width="6" height="6" fill="#fff27a" stroke="#b08a2a"/><path d="M6.5 7.5 H8.5 M7.5 6.5 V8.5" stroke="#b08a2a" stroke-width="1"/><rect x="12.5" y="1.5" width="2" height="2" fill="#fff27a" stroke="#b08a2a"/><rect x="12.5" y="6.5" width="2" height="2" fill="#fff27a" stroke="#b08a2a"/><rect x="12.5" y="11.5" width="2" height="2" fill="#fff27a" stroke="#b08a2a"/></svg>
<div class="t" style="left:27px;top:147px;transform-origin:0 0;transform:rotate(90deg);letter-spacing:-0.266px">Code Explorer</div>
<div class="t" style="left:39.5px;top:131px;;letter-spacing:0.115px">Works...</div>
<svg style="left:91px;top:135px" width="8" height="4" viewBox="0 0 8 4"><path d="M0 0 H8 L4 4 Z" fill="#1e1e1e"/></svg>
<svg style="left:108px;top:131px" width="7" height="11" viewBox="0 0 7 11"><path d="M1.5 0.5 H5.5 M2 0.5 V6 M5 0.5 V6 M0 6.5 H7 M3.5 6.5 V11" stroke="#1e1e1e" stroke-width="1" fill="none"/><rect x="4" y="1" width="1.5" height="5" fill="#1e1e1e"/></svg>
<svg style="left:124px;top:133px" width="10" height="9" viewBox="0 0 10 9"><path d="M1 0.5 L9 8.5 M9 0.5 L1 8.5" stroke="#1e1e1e" stroke-width="1.7"/></svg>
<svg style="left:40px;top:156px" width="16" height="16" viewBox="0 0 16 16"><path d="M0.5 2.5 L2.5 0.5 H8.5 L6.5 2.5 Z" fill="#f2f9ff" stroke="#6ab0f0" stroke-width=".9"/><path d="M6.5 2.5 L8.5 0.5 V10.5 L6.5 12.5 Z" fill="#8cc4f6" stroke="#6ab0f0" stroke-width=".9"/><rect x="0.5" y="2.5" width="6" height="10" fill="#d4eaff" stroke="#6ab0f0" stroke-width=".9"/><path d="M1.5 5.5 H5.5 M1.5 7.5 H5.5" stroke="#6ab0f0" stroke-width="1"/><rect x="2" y="9.5" width="1.6" height="1.6" fill="#3a8ee6"/><path d="M10.5 7.5 V4.5 H13.5 V8.5" fill="none" stroke="#7a6ad0" stroke-width="1.2"/><path d="M11 1.8 L8.6 4.5 L11 7.2 Z" fill="#7a6ad0"/><path d="M10.5 9.5 H13.5 L15.5 11.5 V15.5 H10.5 Z" fill="#fff" stroke="#445"/></svg>
<svg style="left:62px;top:163px" width="5" height="3" viewBox="0 0 5 3"><path d="M0 0 L5 0 L2.5 3 Z" fill="#000"/></svg>
<div class="a" style="left:37px;top:177px;width:100px;height:20px;background:#fff;border:1px solid #ababab"></div>
<svg style="left:124px;top:185px" width="8" height="4" viewBox="0 0 8 4"><path d="M0 0 H8 L4 4 Z" fill="#6d6d6d"/></svg>
<svg style="left:40px;top:202px" width="15" height="14" viewBox="0 0 15 14"><path d="M1 6 L2.6 1.2 H5.6 L6.8 5 H8.2 L9.4 1.2 H12.4 L14 6 L15 11 V13 H9 V9.5 H6 V13 H0 V11 Z" fill="#58585c"/><path d="M3 2 H5 L5.5 5 H2.5Z M10 2 H12 L12.5 5 H9.5 Z" fill="#9c9ca0"/><path d="M1.5 7 H4.5 V10 H1 Z M10.5 7 H13.5 L14 10 H10.5 Z" fill="#77777b"/><rect x="0.5" y="11" width="5" height="2.2" fill="#2e2e30"/><rect x="9.5" y="11" width="5" height="2.2" fill="#2e2e30"/></svg>
<svg style="left:62px;top:208px" width="5" height="3" viewBox="0 0 5 3"><path d="M0 0 L5 0 L2.5 3 Z" fill="#000"/></svg>
<svg style="left:76px;top:201px" width="12" height="15" viewBox="0 0 12 15"><rect x="0.5" y="1.5" width="11" height="13" fill="#f8fbff" stroke="#d6a878"/><path d="M2.5 5.5 H9.5 M2.5 7.5 H9.5 M2.5 9.5 H9.5 M2.5 11.5 H9.5" stroke="#5aa2ea" stroke-width="1"/><rect x="3.5" y="0.3" width="5" height="3" rx="1.2" fill="#7dbdf5" stroke="#4a96e6" stroke-width=".7"/></svg>
<svg style="left:93px;top:208px" width="5" height="3" viewBox="0 0 5 3"><path d="M0 0 L5 0 L2.5 3 Z" fill="#000"/></svg>
<div class="a" style="left:106px;top:198px;width:1px;height:23px;background:#c3c3d4"></div>
<svg style="left:113px;top:202px" width="15" height="14" viewBox="0 0 15 14"><rect x="0.5" y="2.5" width="14" height="11" rx="1" fill="#e6e6e9" stroke="#d2d2d6"/><path d="M4 2.5 L6 0.5 H12 L14 2.5" fill="#e6e6e9" stroke="#d2d2d6"/><path d="M3 9 L6 6 L8 8 L11 5" stroke="#d2d2d6" fill="none" stroke-width="1.3"/></svg>
<div class="a" style="left:35px;top:227px;width:105px;height:218px;background:#fff"></div>
<div class="a" style="left:35px;top:227px;width:88px;height:200px;background:#fff;overflow:hidden"><div class="a" style="left:24px;top:0px;width:1px;height:200px;background-image:linear-gradient(#9a9a9a 50%,transparent 50%);background-size:1px 2px"></div><div class="a" style="left:39px;top:0px;width:1px;height:200px;background-image:linear-gradient(#9a9a9a 50%,transparent 50%);background-size:1px 2px"></div><div class="a" style="left:54px;top:19px;width:1px;height:181px;background-image:linear-gradient(#9a9a9a 50%,transparent 50%);background-size:1px 2px"></div><div class="a" style="left:69px;top:90px;width:1px;height:64px;background-image:linear-gradient(#9a9a9a 50%,transparent 50%);background-size:1px 2px"></div></div>
<div class="a" style="left:79px;top:236px;width:6px;height:1px;background-image:linear-gradient(90deg,#9a9a9a 50%,transparent 50%);background-size:2px 1px"></div>
<svg style="left:70px;top:232px" width="9" height="9" viewBox="0 0 9 9"><rect x="0.5" y="0.5" width="8" height="8" rx="1" fill="#fff" stroke="#8ea0bc"/><rect x="1" y="5" width="7" height="3" fill="#e8e6dc" opacity=".6"/><path d="M2 4.5 H7" stroke="#000" stroke-width="1"/></svg>
<svg style="left:85px;top:230px" width="16" height="13" viewBox="0 0 16 13"><path d="M0.6 2.5 C0.6 1.2 1.2 0.6 2.4 0.6 H5.4 L7 2.2 H13.6 C14.8 2.2 15.4 2.8 15.4 4 V10.6 C15.4 11.8 14.8 12.4 13.6 12.4 H2.4 C1.2 12.4 0.6 11.8 0.6 10.6 Z" fill="#fbe38a" stroke="#b8860b" stroke-width="1.2"/><path d="M1.5 4.5 H14.5 V10.5 C14.5 11.2 14.2 11.5 13.5 11.5 H2.5 C1.8 11.5 1.5 11.2 1.5 10.5 Z" fill="#fff3b0"/><path d="M1.5 9 H14.5 V11 H1.5 Z" fill="#f6d66a" opacity=".8"/></svg>
<div class="t" style="left:106px;top:230px;width:16px;overflow:hidden;letter-spacing:.3px">mod_</div>
<div class="a" style="left:94px;top:254px;width:6px;height:1px;background-image:linear-gradient(90deg,#9a9a9a 50%,transparent 50%);background-size:2px 1px"></div>
<svg style="left:85px;top:250px" width="9" height="9" viewBox="0 0 9 9"><rect x="0.5" y="0.5" width="8" height="8" rx="1" fill="#fff" stroke="#8ea0bc"/><rect x="1" y="5" width="7" height="3" fill="#e8e6dc" opacity=".6"/><path d="M2 4.5 H7" stroke="#000" stroke-width="1"/><path d="M4.5 2 V7" stroke="#000" stroke-width="1"/></svg>
<svg style="left:100px;top:248px" width="16" height="13" viewBox="0 0 16 13"><path d="M0.6 2.5 C0.6 1.2 1.2 0.6 2.4 0.6 H5.4 L7 2.2 H13.6 C14.8 2.2 15.4 2.8 15.4 4 V10.6 C15.4 11.8 14.8 12.4 13.6 12.4 H2.4 C1.2 12.4 0.6 11.8 0.6 10.6 Z" fill="#fbe38a" stroke="#b8860b" stroke-width="1.2"/><path d="M1.5 4.5 H14.5 V10.5 C14.5 11.2 14.2 11.5 13.5 11.5 H2.5 C1.8 11.5 1.5 11.2 1.5 10.5 Z" fill="#fff3b0"/><path d="M1.5 9 H14.5 V11 H1.5 Z" fill="#f6d66a" opacity=".8"/></svg>
<div class="a" style="left:94px;top:272px;width:6px;height:1px;background-image:linear-gradient(90deg,#9a9a9a 50%,transparent 50%);background-size:2px 1px"></div>
<svg style="left:85px;top:268px" width="9" height="9" viewBox="0 0 9 9"><rect x="0.5" y="0.5" width="8" height="8" rx="1" fill="#fff" stroke="#8ea0bc"/><rect x="1" y="5" width="7" height="3" fill="#e8e6dc" opacity=".6"/><path d="M2 4.5 H7" stroke="#000" stroke-width="1"/><path d="M4.5 2 V7" stroke="#000" stroke-width="1"/></svg>
<svg style="left:100px;top:266px" width="16" height="13" viewBox="0 0 16 13"><path d="M0.6 2.5 C0.6 1.2 1.2 0.6 2.4 0.6 H5.4 L7 2.2 H13.6 C14.8 2.2 15.4 2.8 15.4 4 V10.6 C15.4 11.8 14.8 12.4 13.6 12.4 H2.4 C1.2 12.4 0.6 11.8 0.6 10.6 Z" fill="#fbe38a" stroke="#b8860b" stroke-width="1.2"/><path d="M1.5 4.5 H14.5 V10.5 C14.5 11.2 14.2 11.5 13.5 11.5 H2.5 C1.8 11.5 1.5 11.2 1.5 10.5 Z" fill="#fff3b0"/><path d="M1.5 9 H14.5 V11 H1.5 Z" fill="#f6d66a" opacity=".8"/></svg>
<div class="a" style="left:94px;top:290px;width:6px;height:1px;background-image:linear-gradient(90deg,#9a9a9a 50%,transparent 50%);background-size:2px 1px"></div>
<svg style="left:85px;top:286px" width="9" height="9" viewBox="0 0 9 9"><rect x="0.5" y="0.5" width="8" height="8" rx="1" fill="#fff" stroke="#8ea0bc"/><rect x="1" y="5" width="7" height="3" fill="#e8e6dc" opacity=".6"/><path d="M2 4.5 H7" stroke="#000" stroke-width="1"/></svg>
<svg style="left:100px;top:284px" width="16" height="13" viewBox="0 0 16 13"><path d="M0.6 2.5 C0.6 1.2 1.2 0.6 2.4 0.6 H5.4 L7 2.2 H13.6 C14.8 2.2 15.4 2.8 15.4 4 V10.6 C15.4 11.8 14.8 12.4 13.6 12.4 H2.4 C1.2 12.4 0.6 11.8 0.6 10.6 Z" fill="#fbe38a" stroke="#b8860b" stroke-width="1.2"/><path d="M1.5 4.5 H14.5 V10.5 C14.5 11.2 14.2 11.5 13.5 11.5 H2.5 C1.8 11.5 1.5 11.2 1.5 10.5 Z" fill="#fff3b0"/><path d="M1.5 9 H14.5 V11 H1.5 Z" fill="#f6d66a" opacity=".8"/></svg>
<div class="a" style="left:109px;top:308px;width:5px;height:1px;background-image:linear-gradient(90deg,#9a9a9a 50%,transparent 50%);background-size:2px 1px"></div>
<svg style="left:100px;top:304px" width="9" height="9" viewBox="0 0 9 9"><rect x="0.5" y="0.5" width="8" height="8" rx="1" fill="#fff" stroke="#8ea0bc"/><rect x="1" y="5" width="7" height="3" fill="#e8e6dc" opacity=".6"/><path d="M2 4.5 H7" stroke="#000" stroke-width="1"/><path d="M4.5 2 V7" stroke="#000" stroke-width="1"/></svg>
<svg style="left:115px;top:302px" width="8" height="13" viewBox="0 0 8 13"><path d="M0.6 2.5 C0.6 1.2 1.2 0.6 2.4 0.6 H5.4 L7 2.2 H13.6 C14.8 2.2 15.4 2.8 15.4 4 V10.6 C15.4 11.8 14.8 12.4 13.6 12.4 H2.4 C1.2 12.4 0.6 11.8 0.6 10.6 Z" fill="#fbe38a" stroke="#b8860b" stroke-width="1.2"/><path d="M1.5 4.5 H14.5 V10.5 C14.5 11.2 14.2 11.5 13.5 11.5 H2.5 C1.8 11.5 1.5 11.2 1.5 10.5 Z" fill="#fff3b0"/><path d="M1.5 9 H14.5 V11 H1.5 Z" fill="#f6d66a" opacity=".8"/></svg>
<div class="a" style="left:105px;top:326px;width:8px;height:1px;background-image:linear-gradient(90deg,#9a9a9a 50%,transparent 50%);background-size:2px 1px"></div>
<div class="a" style="left:105px;top:344px;width:8px;height:1px;background-image:linear-gradient(90deg,#9a9a9a 50%,transparent 50%);background-size:2px 1px"></div>
<div class="a" style="left:105px;top:362px;width:8px;height:1px;background-image:linear-gradient(90deg,#9a9a9a 50%,transparent 50%);background-size:2px 1px"></div>
<div class="a" style="left:105px;top:380px;width:8px;height:1px;background-image:linear-gradient(90deg,#9a9a9a 50%,transparent 50%);background-size:2px 1px"></div>
<svg style="left:115px;top:319px" width="8" height="16" viewBox="0 0 8 16"><rect x="3.5" y="0.5" width="6" height="6" fill="#fff" stroke="#2a6fd6"/><rect x="0.5" y="5.5" width="10" height="8" rx="3" fill="#2a6fd6" stroke="#1b55b8"/><text x="2.6" y="12" font-family="Liberation Sans,sans-serif" font-size="6" font-weight="bold" fill="#fff">P</text></svg>
<svg style="left:115px;top:355px" width="8" height="16" viewBox="0 0 8 16"><rect x="3.5" y="0.5" width="6" height="6" fill="#fff" stroke="#2a6fd6"/><rect x="0.5" y="5.5" width="10" height="8" rx="3" fill="#2a6fd6" stroke="#1b55b8"/><text x="2.6" y="12" font-family="Liberation Sans,sans-serif" font-size="6" font-weight="bold" fill="#fff">P</text></svg>
<svg style="left:115px;top:337px" width="8" height="14" viewBox="0 0 8 14"><circle cx="7" cy="7" r="6.5" fill="#d93a2b"/><path d="M7 7 L0.8 9.5 A6.5 6.5 0 0 0 9 13.2 Z" fill="#2aa84a"/><circle cx="7" cy="7" r="3" fill="#fff"/><circle cx="7" cy="7" r="2.2" fill="#3a7be0"/></svg>
<svg style="left:115px;top:373px" width="8" height="14" viewBox="0 0 8 14"><rect x="0.5" y="0.5" width="12" height="13" fill="#fff" stroke="#9a9a9a"/><path d="M3 4 L2 5 L3 6 M5 4 H7 M3 8 H7 M3 10 H7" stroke="#556" stroke-width=".9" fill="none"/></svg>
<div class="a" style="left:94px;top:398px;width:6px;height:1px;background-image:linear-gradient(90deg,#9a9a9a 50%,transparent 50%);background-size:2px 1px"></div>
<svg style="left:85px;top:394px" width="9" height="9" viewBox="0 0 9 9"><rect x="0.5" y="0.5" width="8" height="8" rx="1" fill="#fff" stroke="#8ea0bc"/><rect x="1" y="5" width="7" height="3" fill="#e8e6dc" opacity=".6"/><path d="M2 4.5 H7" stroke="#000" stroke-width="1"/><path d="M4.5 2 V7" stroke="#000" stroke-width="1"/></svg>
<svg style="left:100px;top:392px" width="16" height="13" viewBox="0 0 16 13"><path d="M0.6 2.5 C0.6 1.2 1.2 0.6 2.4 0.6 H5.4 L7 2.2 H13.6 C14.8 2.2 15.4 2.8 15.4 4 V10.6 C15.4 11.8 14.8 12.4 13.6 12.4 H2.4 C1.2 12.4 0.6 11.8 0.6 10.6 Z" fill="#fbe38a" stroke="#b8860b" stroke-width="1.2"/><path d="M1.5 4.5 H14.5 V10.5 C14.5 11.2 14.2 11.5 13.5 11.5 H2.5 C1.8 11.5 1.5 11.2 1.5 10.5 Z" fill="#fff3b0"/><path d="M1.5 9 H14.5 V11 H1.5 Z" fill="#f6d66a" opacity=".8"/></svg>
<div class="a" style="left:94px;top:416px;width:6px;height:1px;background-image:linear-gradient(90deg,#9a9a9a 50%,transparent 50%);background-size:2px 1px"></div>
<svg style="left:85px;top:412px" width="9" height="9" viewBox="0 0 9 9"><rect x="0.5" y="0.5" width="8" height="8" rx="1" fill="#fff" stroke="#8ea0bc"/><rect x="1" y="5" width="7" height="3" fill="#e8e6dc" opacity=".6"/><path d="M2 4.5 H7" stroke="#000" stroke-width="1"/><path d="M4.5 2 V7" stroke="#000" stroke-width="1"/></svg>
<svg style="left:100px;top:410px" width="16" height="13" viewBox="0 0 16 13"><path d="M0.6 2.5 C0.6 1.2 1.2 0.6 2.4 0.6 H5.4 L7 2.2 H13.6 C14.8 2.2 15.4 2.8 15.4 4 V10.6 C15.4 11.8 14.8 12.4 13.6 12.4 H2.4 C1.2 12.4 0.6 11.8 0.6 10.6 Z" fill="#fbe38a" stroke="#b8860b" stroke-width="1.2"/><path d="M1.5 4.5 H14.5 V10.5 C14.5 11.2 14.2 11.5 13.5 11.5 H2.5 C1.8 11.5 1.5 11.2 1.5 10.5 Z" fill="#fff3b0"/><path d="M1.5 9 H14.5 V11 H1.5 Z" fill="#f6d66a" opacity=".8"/></svg>
<div class="a" style="left:122px;top:227px;width:17px;height:200px;background:linear-gradient(90deg,#f3f1ec,#fefefb)"></div>
<div class="a" style="left:122px;top:228px;width:17px;height:16px;background:linear-gradient(135deg,#cfdcfd,#b9cbf8);border:1px solid #fff;border-radius:3px;box-shadow:inset -1px -1px 0 #a6bcf2, inset 1px 1px 0 #dbe5fe"></div>
<svg style="left:122px;top:228px" width="17" height="16" viewBox="0 0 17 16"><path d="M5.0 9.5 L8.5 6.0 L12.0 9.5" fill="none" stroke="#4d6185" stroke-width="2"/></svg>
<div class="a" style="left:122px;top:411px;width:17px;height:16px;background:linear-gradient(135deg,#cfdcfd,#b9cbf8);border:1px solid #fff;border-radius:3px;box-shadow:inset -1px -1px 0 #a6bcf2, inset 1px 1px 0 #dbe5fe"></div>
<svg style="left:122px;top:411px" width="17" height="16" viewBox="0 0 17 16"><path d="M5.0 6.5 L8.5 10.0 L12.0 6.5" fill="none" stroke="#4d6185" stroke-width="2"/></svg>
<div class="a" style="left:122px;top:282px;width:17px;height:14px;background:linear-gradient(135deg,#cfdcfd,#b9cbf8);border:1px solid #fff;border-radius:3px;box-shadow:inset -1px -1px 0 #a6bcf2, inset 1px 1px 0 #dbe5fe"></div>
<div class="a" style="left:35px;top:427px;width:88px;height:17px;background:linear-gradient(#f3f1ec,#fefefb)"></div>
<div class="a" style="left:36px;top:427px;width:16px;height:17px;background:linear-gradient(135deg,#cfdcfd,#b9cbf8);border:1px solid #fff;border-radius:3px;box-shadow:inset -1px -1px 0 #a6bcf2, inset 1px 1px 0 #dbe5fe"></div>
<svg style="left:36px;top:427px" width="16" height="17" viewBox="0 0 16 17"><path d="M9.5 5.0 L6.0 8.5 L9.5 12.0" fill="none" stroke="#4d6185" stroke-width="2"/></svg>
<div class="a" style="left:105px;top:427px;width:16px;height:17px;background:linear-gradient(135deg,#cfdcfd,#b9cbf8);border:1px solid #fff;border-radius:3px;box-shadow:inset -1px -1px 0 #a6bcf2, inset 1px 1px 0 #dbe5fe"></div>
<svg style="left:105px;top:427px" width="16" height="17" viewBox="0 0 16 17"><path d="M6.5 5.0 L10.0 8.5 L6.5 12.0" fill="none" stroke="#4d6185" stroke-width="2"/></svg>
<div class="a" style="left:53px;top:427px;width:17px;height:17px;background:linear-gradient(135deg,#cfdcfd,#b9cbf8);border:1px solid #fff;border-radius:3px;box-shadow:inset -1px -1px 0 #a6bcf2, inset 1px 1px 0 #dbe5fe"></div>
<div class="a" style="left:57px;top:432px;width:1px;height:6px;background:#eef3ff"></div>
<div class="a" style="left:58px;top:433px;width:1px;height:6px;background:#8ea4dc;opacity:.6"></div>
<div class="a" style="left:59px;top:432px;width:1px;height:6px;background:#eef3ff"></div>
<div class="a" style="left:60px;top:433px;width:1px;height:6px;background:#8ea4dc;opacity:.6"></div>
<div class="a" style="left:61px;top:432px;width:1px;height:6px;background:#eef3ff"></div>
<div class="a" style="left:62px;top:433px;width:1px;height:6px;background:#8ea4dc;opacity:.6"></div>
<div class="a" style="left:63px;top:432px;width:1px;height:6px;background:#eef3ff"></div>
<div class="a" style="left:64px;top:433px;width:1px;height:6px;background:#8ea4dc;opacity:.6"></div>
<div class="a" style="left:123px;top:428px;width:16px;height:16px;background:#ece9d8"></div>
<div class="a" style="left:70px;top:445px;width:36px;height:20px;background:#f6f6f8"></div>
<div class="a" style="left:69px;top:445px;width:1px;height:20px;background:#d6d6e0"></div>
<div class="a" style="left:105px;top:445px;width:1px;height:20px;background:#d6d6e0"></div>
<div class="t" style="left:41px;top:448px;font-size:11px;letter-spacing:.6px">Fr...</div>
<div class="t" style="left:76px;top:448px;font-size:11px;letter-spacing:.6px;color:#0a6acc">W...</div>
<div class="t" style="left:111px;top:448px;font-size:11px;letter-spacing:.6px">E...</div>
<div class="a" style="left:224px;top:127px;width:199px;height:25px;background:#007acc"></div>
<div class="a" style="left:146px;top:150px;width:758px;height:2px;background:#007acc"></div>
<svg style="left:150px;top:132px" width="16" height="15" viewBox="0 0 16 15"><path d="M4.5 0.5 H10.5 L13.5 3.5 V9 H4.5 Z" fill="#e8f4ff" stroke="#5aa2ee"/><rect x="5.5" y="1" width="5" height="3.5" fill="#a8d2fa"/><path d="M10.5 0.5 V3.5 H13.5" fill="#fff" stroke="#5aa2ee" stroke-width=".8"/><rect x="0.5" y="5.5" width="14" height="8.5" rx="3.5" fill="#2a78e0" stroke="#1c5ec8"/><text x="1.8" y="12.2" font-family="Liberation Sans,sans-serif" font-size="6.2" font-weight="bold" fill="#fff" letter-spacing=".2">PHP</text></svg>
<div class="t" style="left:167.5px;top:132px;;letter-spacing:0.064px">helper.php</div>
<svg style="left:229px;top:132px" width="16" height="15" viewBox="0 0 16 15"><path d="M4.5 0.5 H10.5 L13.5 3.5 V9 H4.5 Z" fill="#e8f4ff" stroke="#5aa2ee"/><rect x="5.5" y="1" width="5" height="3.5" fill="#a8d2fa"/><path d="M10.5 0.5 V3.5 H13.5" fill="#fff" stroke="#5aa2ee" stroke-width=".8"/><rect x="0.5" y="5.5" width="14" height="8.5" rx="3.5" fill="#2a78e0" stroke="#1c5ec8"/><text x="1.8" y="12.2" font-family="Liberation Sans,sans-serif" font-size="6.2" font-weight="bold" fill="#fff" letter-spacing=".2">PHP</text></svg>
<div class="t" style="left:245px;top:132px;color:#fff;letter-spacing:0.582px;font-weight:bold">mod_articles_category.php</div>
<svg style="left:410px;top:135px" width="9" height="8" viewBox="0 0 9 8"><path d="M0.5 0.5 L8 7.5 M8 0.5 L0.5 7.5" stroke="#d6ebfa" stroke-width="1.2"/></svg>
<svg style="left:427px;top:132px" width="16" height="15" viewBox="0 0 16 15"><path d="M4.5 0.5 H10.5 L13.5 3.5 V9 H4.5 Z" fill="#e8f4ff" stroke="#5aa2ee"/><rect x="5.5" y="1" width="5" height="3.5" fill="#a8d2fa"/><path d="M10.5 0.5 V3.5 H13.5" fill="#fff" stroke="#5aa2ee" stroke-width=".8"/><rect x="0.5" y="5.5" width="14" height="8.5" rx="3.5" fill="#2a78e0" stroke="#1c5ec8"/><text x="1.8" y="12.2" font-family="Liberation Sans,sans-serif" font-size="6.2" font-weight="bold" fill="#fff" letter-spacing=".2">PHP</text></svg>
<div class="t" style="left:444px;top:132px;;letter-spacing:0.033px">index.php</div>
<svg style="left:502px;top:131px" width="14" height="16" viewBox="0 0 14 16"><path d="M0.7 0.8 L12.8 7.5 L0.7 14.2 Z" fill="#6fcf57" stroke="#49aa36" stroke-width="1"/><path d="M2 3 L9.8 7.3 L2 9 Z" fill="#a6e294" opacity=".7"/><text x="6" y="15.5" font-family="Liberation Serif,serif" font-weight="bold" font-size="7.5" fill="#111">D</text></svg>
<div class="t" style="left:519px;top:132px;;letter-spacing:0.085px">Output</div>
<svg style="left:876px;top:135px" width="9" height="8" viewBox="0 0 9 8"><rect x="0" y="0" width="8.5" height="1.5" fill="#444"/><path d="M0 3 H8.5 L4.25 7.5 Z" fill="#444"/></svg>
<svg style="left:890px;top:135px" width="9" height="8" viewBox="0 0 9 8"><path d="M0.5 0.5 L7.5 7.5 M7.5 0.5 L0.5 7.5" stroke="#222" stroke-width="1.5"/></svg>
<div class="a" style="left:170px;top:152px;width:1px;height:285px;background:#cfcfdc"></div>
<svg style="left:154px;top:159px" width="11" height="9" viewBox="0 0 11 9"><path d="M1 0.5 L10 8.5 M10 0.5 L1 8.5" stroke="#111" stroke-width="1.8"/></svg>
<svg style="left:153px;top:178px" width="13" height="13" viewBox="0 0 13 13"><path d="M1 5 H12 M1 8 H12" stroke="#111" stroke-width="1.2"/><path d="M6.5 0 L3.8 3 H9.2 Z M6.5 13 L3.8 10 H9.2 Z" fill="#2a7de0"/><path d="M6.5 2 V11" stroke="#2a7de0" stroke-width="1"/></svg>
<svg style="left:152px;top:199px" width="14" height="14" viewBox="0 0 14 14"><path d="M0 1 H9 M0 3.5 H9 M0 6 H9" stroke="#111" stroke-width="1.2" stroke-dasharray="2 1"/><path d="M10.5 3 C13.5 3 13.5 10 8 10" fill="none" stroke="#2a7de0" stroke-width="1.4"/><path d="M9 7 L5 10 L9 13 Z" fill="#2a7de0"/></svg>
<div class="a" style="left:148px;top:218px;width:23px;height:21px;background:#fff;border:1px solid #9aa8c0;border-radius:4px"></div>
<div class="a" style="left:148px;top:240px;width:23px;height:21px;background:#fff;border:1px solid #9aa8c0;border-radius:4px"></div>
<div class="a" style="left:148px;top:284px;width:23px;height:21px;background:#fff;border:1px solid #9aa8c0;border-radius:4px"></div>
<svg style="left:153px;top:222px" width="14" height="13" viewBox="0 0 14 13"><path d="M0 6.5 L3.5 3.5 V9.5 Z" fill="#2a7de0"/><rect x="5" y="1" width="6" height="11" fill="#fff" stroke="#111" stroke-width="1.2"/><path d="M7.5 1 V12" stroke="#111" stroke-width="1.4"/><path d="M12 2 V11" stroke="#2a7de0" stroke-width="1" stroke-dasharray="1 1"/></svg>
<div class="t" style="left:154px;top:243px;font-size:14px;line-height:16px;height:16px;color:#111;font-weight:bold">#</div>
<div class="t" style="left:154px;top:264px;font-size:13px;line-height:16px;height:16px;color:#111;font-family:Liberation Serif,serif;font-weight:bold">¶</div>
<svg style="left:153px;top:288px" width="14" height="14" viewBox="0 0 14 14"><path d="M0 1 H12 M0 3.5 H12" stroke="#e8962c" stroke-width="1.2" stroke-dasharray="2 1"/><path d="M0 6 H12" stroke="#2a7de0" stroke-width="1.2" stroke-dasharray="2 1"/><path d="M3 13.5 L8 8.5" stroke="#111" stroke-width="1.4"/><path d="M5 8 H9 V12 Z" fill="#111"/></svg>
<svg style="left:152px;top:310px" width="14" height="13" viewBox="0 0 14 13"><path d="M0 6.5 H5" stroke="#2a7de0" stroke-width="1.6"/><path d="M4 3.5 L7 6.5 L4 9.5 Z" fill="#2a7de0"/><path d="M6 1 H13 M8 3.8 H13 M8 6.5 H13 M8 9.2 H13 M6 12 H13" stroke="#111" stroke-width="1.2" stroke-dasharray="2 1"/><path d="M9.5 0 V13" stroke="#111" stroke-width="1" stroke-dasharray="1 1"/></svg>
<svg style="left:152px;top:332px" width="14" height="13" viewBox="0 0 14 13"><path d="M2 6.5 H7" stroke="#2a7de0" stroke-width="1.6"/><path d="M3 3.5 L0 6.5 L3 9.5 Z" fill="#2a7de0"/><path d="M6 1 H13 M8 3.8 H13 M8 6.5 H13 M8 9.2 H13 M6 12 H13" stroke="#111" stroke-width="1.2" stroke-dasharray="2 1"/><path d="M9.5 0 V13" stroke="#111" stroke-width="1" stroke-dasharray="1 1"/></svg>
<svg style="left:152px;top:353px" width="14" height="16" viewBox="0 0 14 16"><path d="M1 2.5 L12.5 0.5 V11 L1 12.5 Z" fill="#6cc4f8" stroke="#8a86c8" stroke-width="1.2"/><path d="M2 3.5 L11.5 1.8 V6 L2 8 Z" fill="#a8dcfc"/><path d="M5 12 V14.5 H2.5 L10 15.2 L8.5 14 V11.6" fill="#9a96d0" stroke="#8a86c8" stroke-width=".8"/></svg>
<div class="a" style="left:171px;top:152px;width:46px;height:285px;background:linear-gradient(90deg,#efeff2 0,#efeff2 42px,#f8f8fa 46px)"></div>
<div class="a" style="left:217px;top:152px;width:658px;height:269px;background:#fff"></div>
<div class="a" style="left:868px;top:152px;width:7px;height:269px;background:#fdfcf8;border-left:1px solid #ebe6d8"></div>
<div class="a" style="left:227px;top:306px;width:647px;height:17px;background:#b4c7ee"></div>
<div class="a" style="left:227px;top:357px;width:647px;height:17px;background:#ececec"></div>
<div class="code" style="left:176px;top:153px;color:#2a2a2a">97</div>
<div class="code" style="left:176px;top:170px;color:#2a2a2a">98</div>
<div class="code" style="left:176px;top:187px;color:#2a2a2a">99</div>
<div class="code" style="left:176px;top:204px;color:#2a2a2a">100</div>
<div class="code" style="left:176px;top:221px;color:#2a2a2a">101</div>
<div class="code" style="left:176px;top:238px;color:#2a2a2a">102</div>
<div class="code" style="left:176px;top:255px;color:#2a2a2a">103</div>
<div class="code" style="left:176px;top:272px;color:#2a2a2a">104</div>
<div class="code" style="left:176px;top:289px;color:#2a2a2a">105</div>
<div class="code" style="left:176px;top:323px;color:#2a2a2a">107</div>
<div class="code" style="left:176px;top:340px;color:#2a2a2a">108</div>
<div class="code" style="left:176px;top:357px;color:#2a2a2a">109</div>
<div class="code" style="left:176px;top:374px;color:#2a2a2a">110</div>
<div class="code" style="left:176px;top:391px;color:#2a2a2a">111</div>
<div class="code" style="left:176px;top:408px;color:#2a2a2a">112</div>
<div class="code" style="left:176px;top:306px;color:#2a2a2a">106</div>
<svg style="left:199px;top:193px" width="5" height="5" viewBox="0 0 5 5"><circle cx="2.3" cy="2.5" r="2" fill="#0a14c8"/></svg>
<svg style="left:199px;top:278px" width="5" height="5" viewBox="0 0 5 5"><circle cx="2.3" cy="2.5" r="2" fill="#0a14c8"/></svg>
<svg style="left:199px;top:312px" width="5" height="5" viewBox="0 0 5 5"><circle cx="2.3" cy="2.5" r="2" fill="#0a14c8"/></svg>
<svg style="left:199px;top:346px" width="5" height="5" viewBox="0 0 5 5"><circle cx="2.3" cy="2.5" r="2" fill="#0a14c8"/></svg>
<svg style="left:199px;top:380px" width="5" height="5" viewBox="0 0 5 5"><circle cx="2.3" cy="2.5" r="2" fill="#0a14c8"/></svg>
<svg style="left:199px;top:397px" width="5" height="5" viewBox="0 0 5 5"><circle cx="2.3" cy="2.5" r="2" fill="#0a14c8"/></svg>
<svg style="left:180px;top:310px" width="19" height="10" viewBox="0 0 19 10"><path d="M0 2.5 H5.5 V0 L10.5 4.5 L5.5 9 V6.5 H0 Z" fill="#3d8df0" stroke="#1f6ad8" stroke-width=".7"/><circle cx="14.8" cy="4.6" r="3.9" fill="#e8282c"/><circle cx="13.8" cy="3.4" r="1.3" fill="#f58a8a"/></svg>
<svg style="left:213px;top:191px" width="9" height="9" viewBox="0 0 9 9"><rect x="0.5" y="0.5" width="8" height="8" fill="#fff" stroke="#6a7488"/><path d="M2.2 4.5 H6.8" stroke="#444" stroke-width="1"/></svg>
<svg style="left:213px;top:310px" width="9" height="9" viewBox="0 0 9 9"><rect x="0.5" y="0.5" width="8" height="8" fill="#fff" stroke="#6a7488"/><path d="M2.2 4.5 H6.8" stroke="#444" stroke-width="1"/></svg>
<div class="a" style="left:260px;top:272px;width:1px;height:34px;background-image:linear-gradient(#8aa8e8 50%,transparent 50%);background-size:1px 2px"></div>
<div class="a" style="left:260px;top:323px;width:1px;height:34px;background-image:linear-gradient(#8aa8e8 50%,transparent 50%);background-size:1px 2px"></div>
<div class="code" style="left:228px;top:187px;"><span class="k2">function</span> fix_categories_order( $in_list){</div>
<div class="code" style="left:260px;top:221px;"><span class="cm">//$categories = JCategories::getInstance('Content');</span></div>
<div class="code" style="left:260px;top:238px;"><span class="cm">//$out_list = Array();</span></div>
<div class="code" style="left:260px;top:255px;"><span class="cm">//$categories = $categories-&gt;get()-&gt;getChildren(false);</span></div>
<div class="code" style="left:276px;top:272px;width:592px;overflow:hidden;">$categories =<span class="kw">Array</span>(<span class="st">"Summary of the Trips off the beaten path"</span><span class="kw">,</span> <span class="st">"Travel Off</span></div>
<div class="code" style="left:276px;top:289px;width:598px;overflow:hidden;"><span class="cm">//$categories =Array( "Travel Off The Beaten Path", "Off The Beaten Path in </span></div>
<div class="code" style="left:260px;top:306px;"><span class="k2">foreach</span> ($categories <span class="k2">as</span> $cat) {</div>
<div class="code" style="left:284px;top:323px;"><span class="cm">//print $cat;</span></div>
<div class="code" style="left:284px;top:340px;">$out_list[$cat]=$in_list[$cat];</div>
<div class="code" style="left:260px;top:357px;">}</div>
<div class="code" style="left:260px;top:374px;"><span class="k2">return</span> $out_list;</div>
<div class="code" style="left:228px;top:391px;">}</div>
<div class="a" style="left:875px;top:152px;width:16px;height:269px;background:linear-gradient(90deg,#f1efe8,#fefefb)"></div>
<div class="a" style="left:875px;top:153px;width:15px;height:16px;background:linear-gradient(135deg,#cfdcfd,#b9cbf8);border:1px solid #fff;border-radius:3px;box-shadow:inset -1px -1px 0 #a6bcf2, inset 1px 1px 0 #dbe5fe"></div>
<svg style="left:875px;top:153px" width="15" height="16" viewBox="0 0 15 16"><path d="M4.0 9.5 L7.5 6.0 L11.0 9.5" fill="none" stroke="#4d6185" stroke-width="2"/></svg>
<div class="a" style="left:875px;top:403px;width:15px;height:16px;background:linear-gradient(135deg,#cfdcfd,#b9cbf8);border:1px solid #fff;border-radius:3px;box-shadow:inset -1px -1px 0 #a6bcf2, inset 1px 1px 0 #dbe5fe"></div>
<svg style="left:875px;top:403px" width="15" height="16" viewBox="0 0 15 16"><path d="M4.0 6.5 L7.5 10.0 L11.0 6.5" fill="none" stroke="#4d6185" stroke-width="2"/></svg>
<div class="a" style="left:875px;top:369px;width:15px;height:31px;background:linear-gradient(135deg,#cfdcfd,#b9cbf8);border:1px solid #fff;border-radius:3px;box-shadow:inset -1px -1px 0 #a6bcf2, inset 1px 1px 0 #dbe5fe"></div>
<div class="a" style="left:879px;top:380px;width:6px;height:1px;background:#eef3ff"></div>
<div class="a" style="left:880px;top:381px;width:6px;height:1px;background:#8ea4dc;opacity:.6"></div>
<div class="a" style="left:879px;top:382px;width:6px;height:1px;background:#eef3ff"></div>
<div class="a" style="left:880px;top:383px;width:6px;height:1px;background:#8ea4dc;opacity:.6"></div>
<div class="a" style="left:879px;top:384px;width:6px;height:1px;background:#eef3ff"></div>
<div class="a" style="left:880px;top:385px;width:6px;height:1px;background:#8ea4dc;opacity:.6"></div>
<div class="a" style="left:879px;top:386px;width:6px;height:1px;background:#eef3ff"></div>
<div class="a" style="left:880px;top:387px;width:6px;height:1px;background:#8ea4dc;opacity:.6"></div>
<div class="a" style="left:891px;top:152px;width:11px;height:285px;background:#efeff2;border-left:1px solid #d4d6e4;border-right:1px solid #d4d6e4"></div>
<svg style="left:894px;top:161px" width="5" height="3" viewBox="0 0 5 3"><path d="M0 0 L5 0 L2.5 3 Z" fill="#000"/></svg>
<div class="a" style="left:892px;top:382px;width:10px;height:38px;background:#dfe2f3;border:1px solid #b4bde0"></div>
<div class="a" style="left:171px;top:421px;width:704px;height:16px;background:linear-gradient(#f1efe8,#fefefb)"></div>
<div class="a" style="left:172px;top:421px;width:15px;height:16px;background:linear-gradient(135deg,#cfdcfd,#b9cbf8);border:1px solid #fff;border-radius:3px;box-shadow:inset -1px -1px 0 #a6bcf2, inset 1px 1px 0 #dbe5fe"></div>
<svg style="left:172px;top:421px" width="15" height="16" viewBox="0 0 15 16"><path d="M9.0 4.5 L5.5 8.0 L9.0 11.5" fill="none" stroke="#4d6185" stroke-width="2"/></svg>
<div class="a" style="left:858px;top:421px;width:15px;height:16px;background:linear-gradient(135deg,#cfdcfd,#b9cbf8);border:1px solid #fff;border-radius:3px;box-shadow:inset -1px -1px 0 #a6bcf2, inset 1px 1px 0 #dbe5fe"></div>
<svg style="left:858px;top:421px" width="15" height="16" viewBox="0 0 15 16"><path d="M6.0 4.5 L9.5 8.0 L6.0 11.5" fill="none" stroke="#4d6185" stroke-width="2"/></svg>
<div class="a" style="left:189px;top:421px;width:24px;height:16px;background:linear-gradient(135deg,#cfdcfd,#b9cbf8);border:1px solid #fff;border-radius:3px;box-shadow:inset -1px -1px 0 #a6bcf2, inset 1px 1px 0 #dbe5fe"></div>
<div class="a" style="left:197px;top:426px;width:1px;height:6px;background:#eef3ff"></div>
<div class="a" style="left:198px;top:427px;width:1px;height:6px;background:#8ea4dc;opacity:.6"></div>
<div class="a" style="left:199px;top:426px;width:1px;height:6px;background:#eef3ff"></div>
<div class="a" style="left:200px;top:427px;width:1px;height:6px;background:#8ea4dc;opacity:.6"></div>
<div class="a" style="left:201px;top:426px;width:1px;height:6px;background:#eef3ff"></div>
<div class="a" style="left:202px;top:427px;width:1px;height:6px;background:#8ea4dc;opacity:.6"></div>
<div class="a" style="left:203px;top:426px;width:1px;height:6px;background:#eef3ff"></div>
<div class="a" style="left:204px;top:427px;width:1px;height:6px;background:#8ea4dc;opacity:.6"></div>
<div class="a" style="left:875px;top:421px;width:16px;height:16px;background:#ece9d8"></div>
<div class="a" style="left:148px;top:437px;width:755px;height:3px;background:linear-gradient(#cccee0 0,#cccee0 2px,#dddeea 3px)"></div>
<div class="a" style="left:148px;top:437px;width:42px;height:24px;background:#cccee0"></div>
<div class="t" style="left:151.6px;top:443px;color:#666670;letter-spacing:0.113px;font-weight:bold">Editor</div>
<div class="t" style="left:193.7px;top:443px;;letter-spacing:-0.281px">Preview</div>
<svg style="left:876px;top:447px" width="6" height="9" viewBox="0 0 6 9"><path d="M5.5 0.5 V8.5 L0.5 4.5 Z" fill="none" stroke="#555" stroke-width="1"/></svg>
<svg style="left:891px;top:447px" width="6" height="9" viewBox="0 0 6 9"><path d="M0.5 0.5 V8.5 L5.5 4.5 Z" fill="none" stroke="#555" stroke-width="1"/></svg>
<div class="a" style="left:36px;top:465px;width:868px;height:6px;background:#cdcfe0"></div>
<div class="a" style="left:328px;top:160px;width:470px;height:17px;background:#ffffe1;border:1px solid #e8e8c8;box-shadow:1.5px 2px 1.5px rgba(0,0,0,.55)"></div>
<div class="t" style="left:331.5px;top:162px;color:#111;letter-spacing:0.007px">[SFTP:travel-circle] /offbeatenpath/modules/mod_articles_category/mod_articles_category.php</div>
<svg style="left:327px;top:140px" width="12" height="21" viewBox="0 0 12 21"><path d="M0.5 0.5 V16.5 L4.2 13 L7 19.8 L9.6 18.6 L6.8 12 H11.6 Z" fill="#fff" stroke="#000" stroke-width="1"/></svg>
<div class="a" style="left:929px;top:127px;width:6px;height:99px;background:#cfd0e2"></div>
<div class="a" style="left:929px;top:238px;width:6px;height:90px;background:#cfd0e2"></div>
<div class="a" style="left:929px;top:341px;width:6px;height:69px;background:#cfd0e2"></div>
<div class="a" style="left:929px;top:423px;width:6px;height:44px;background:#cfd0e2"></div>
<div class="a" style="left:929px;top:479px;width:6px;height:72px;background:#cfd0e2"></div>
<div class="a" style="left:929px;top:562px;width:6px;height:66px;background:#cfd0e2"></div>
<div class="a" style="left:929px;top:640px;width:6px;height:11px;background:#cfd0e2"></div>
<svg style="left:910px;top:128px" width="16" height="15" viewBox="0 0 16 15"><text x="-0.6" y="13" font-family="Liberation Serif,serif" font-weight="bold" font-size="17" fill="#0a8c1c">i</text><path d="M7.5 4.5 V2.5 H12.5 M7.5 10.5 V12.5 H12.5 M10.5 7.5 H12.5" fill="none" stroke="#b08a2a" stroke-width="1"/><rect x="4.5" y="4.5" width="6" height="6" fill="#fff27a" stroke="#b08a2a"/><path d="M6.5 7.5 H8.5 M7.5 6.5 V8.5" stroke="#b08a2a" stroke-width="1"/><rect x="12.5" y="1.5" width="2" height="2" fill="#fff27a" stroke="#b08a2a"/><rect x="12.5" y="6.5" width="2" height="2" fill="#fff27a" stroke="#b08a2a"/><rect x="12.5" y="11.5" width="2" height="2" fill="#fff27a" stroke="#b08a2a"/></svg>
<div class="t" style="left:924px;top:147px;transform-origin:0 0;transform:rotate(90deg);letter-spacing:-0.181px">Code Navigator</div>
<svg style="left:910px;top:238px" width="15" height="15" viewBox="0 0 15 15"><defs><radialGradient id="b238" cx=".4" cy=".3" r=".8"><stop offset="0" stop-color="#7cc0ff"/><stop offset="1" stop-color="#2a7ad8"/></radialGradient></defs><circle cx="7.5" cy="7.5" r="7" fill="url(#b238)" stroke="#2a7ad8" stroke-width=".8"/><text x="4.2" y="11" font-family="Liberation Sans,sans-serif" font-weight="bold" font-size="10" fill="#fff">S</text></svg>
<div class="t" style="left:924px;top:258px;transform-origin:0 0;transform:rotate(90deg);letter-spacing:-0.235px">NuSoap Client</div>
<svg style="left:910px;top:341px" width="15" height="15" viewBox="0 0 15 15"><defs><radialGradient id="b341" cx=".4" cy=".3" r=".8"><stop offset="0" stop-color="#c890d8"/><stop offset="1" stop-color="#8a3a9c"/></radialGradient></defs><circle cx="7.5" cy="7.5" r="7" fill="url(#b341)" stroke="#8a3a9c" stroke-width=".8"/><text x="4.7" y="11" font-family="Liberation Sans,sans-serif" font-weight="bold" font-size="10" fill="#fff">F</text></svg>
<div class="t" style="left:924px;top:361px;transform-origin:0 0;transform:rotate(90deg);letter-spacing:-0.259px">Functions</div>
<svg style="left:910px;top:423px" width="15" height="15" viewBox="0 0 15 15"><defs><radialGradient id="b423" cx=".4" cy=".3" r=".8"><stop offset="0" stop-color="#7cc0ff"/><stop offset="1" stop-color="#1a6ad8"/></radialGradient></defs><circle cx="7.5" cy="7.5" r="7" fill="url(#b423)" stroke="#1a6ad8" stroke-width=".8"/><text x="4.4" y="11" font-family="Liberation Sans,sans-serif" font-weight="bold" font-size="11" fill="#fff">?</text></svg>
<div class="t" style="left:924px;top:443px;transform-origin:0 0;transform:rotate(90deg);letter-spacing:-0.464px">Help</div>
<svg style="left:910px;top:481px" width="15" height="14" viewBox="0 0 15 14"><rect x="0.6" y="0.6" width="13.8" height="12.8" rx="1" fill="#6e7684" stroke="#3a8ee6" stroke-width="1.2"/><path d="M3.5 3.5 L10 7 L3.5 10.5" fill="none" stroke="#fff" stroke-width="1.4"/></svg>
<div class="t" style="left:924px;top:499px;transform-origin:0 0;transform:rotate(90deg);letter-spacing:0.226px">Terminals</div>
<svg style="left:911px;top:562px" width="13" height="15" viewBox="0 0 13 15"><path d="M0.6 3 C0.6 -0.2 12.4 -0.2 12.4 3 V12 C12.4 15.2 0.6 15.2 0.6 12 Z" fill="#fbe07a" stroke="#d8a830" stroke-width="1.1"/><path d="M0.6 3 C0.6 6 12.4 6 12.4 3 M0.6 8.5 C0.6 11.5 12.4 11.5 12.4 8.5" fill="none" stroke="#d8a830" stroke-width=".9"/></svg>
<div class="t" style="left:924px;top:581px;transform-origin:0 0;transform:rotate(90deg);letter-spacing:-0.290px">DB Client</div>
<svg style="left:910px;top:640px" width="15" height="11" viewBox="0 0 15 11"><rect x="0.5" y="0.5" width="14" height="10" rx="1" fill="#fbd96a" stroke="#d8a830"/><path d="M7.5 2.5 L3.5 6.5 H11.5 Z" fill="none" stroke="#c8781c" stroke-width="1"/><path d="M3 8.5 H12" stroke="#c8781c" stroke-width="1"/></svg>
<div class="a" style="left:469px;top:471px;width:2px;height:182px;background:#e4e5ee"></div>
<div class="t" style="left:39.4px;top:475.5px;;letter-spacing:-0.581px">Locals</div>
<svg style="left:77px;top:479px" width="333" height="5" viewBox="0 0 333 5"><defs><pattern id="hg1" width="4" height="4" patternUnits="userSpaceOnUse"><rect x="0" y="0" width="1" height="1" fill="#8c8c90"/><rect x="2" y="2" width="1" height="1" fill="#8c8c90"/><rect x="1" y="1" width="1" height="1" fill="#fff" opacity=".7"/><rect x="3" y="3" width="1" height="1" fill="#fff" opacity=".7"/></pattern></defs><rect x="0" y="0" width="333" height="5" fill="url(#hg1)"/></svg>
<svg style="left:418px;top:479px" width="8" height="4" viewBox="0 0 8 4"><path d="M0 0 H8 L4 4 Z" fill="#1e1e1e"/></svg>
<svg style="left:435px;top:475px" width="7" height="11" viewBox="0 0 7 11"><path d="M1.5 0.5 H5.5 M2 0.5 V6 M5 0.5 V6 M0 6.5 H7 M3.5 6.5 V11" stroke="#1e1e1e" stroke-width="1" fill="none"/><rect x="4" y="1" width="1.5" height="5" fill="#1e1e1e"/></svg>
<svg style="left:451px;top:477px" width="10" height="9" viewBox="0 0 10 9"><path d="M1 0.5 L9 8.5 M9 0.5 L1 8.5" stroke="#1e1e1e" stroke-width="1.7"/></svg>
<div class="a" style="left:35px;top:492px;width:432px;height:21px;background:#fff;border:1px solid #7f9db9"></div>
<div class="t" style="left:38.7px;top:496px;;letter-spacing:0.033px">fix_categories_order()</div>
<div class="a" style="left:450px;top:494px;width:15px;height:17px;background:linear-gradient(#d0dcfd,#b6c8f7);border:1px solid #e6eefc;border-radius:2px"></div>
<svg style="left:450px;top:494px" width="15" height="17" viewBox="0 0 15 17"><path d="M4 6.5 L7.5 10 L11 6.5" fill="none" stroke="#4d6185" stroke-width="2"/></svg>
<div class="a" style="left:35px;top:514px;width:432px;height:17px;background:linear-gradient(#efecdd 0,#ece9d8 80%,#d8d2bd 95%,#cbc7b8 100%)"></div>
<div class="t" style="left:41.7px;top:516px;color:#000;letter-spacing:-0.870px">Name</div>
<div class="t" style="left:191.6px;top:516px;color:#000;letter-spacing:-0.428px">Value</div>
<div class="a" style="left:184px;top:517px;width:1px;height:12px;background:#c5c2b2"></div>
<div class="a" style="left:185px;top:517px;width:1px;height:12px;background:#fff"></div>
<div class="a" style="left:35px;top:531px;width:432px;height:82px;background:#fff"></div>
<div class="a" style="left:36px;top:548px;width:430px;height:1px;background-image:linear-gradient(90deg,#e0ddd0 50%,transparent 50%);background-size:2px 1px"></div>
<div class="a" style="left:36px;top:566px;width:430px;height:1px;background-image:linear-gradient(90deg,#e0ddd0 50%,transparent 50%);background-size:2px 1px"></div>
<div class="a" style="left:184px;top:531px;width:1px;height:36px;background-image:linear-gradient(#e0ddd0 50%,transparent 50%);background-size:1px 2px"></div>
<svg style="left:41px;top:536px" width="9" height="9" viewBox="0 0 9 9"><rect x="0.5" y="0.5" width="8" height="8" fill="#fff" stroke="#808080"/><path d="M2 4.5 H7 M4.5 2 V7" stroke="#000" stroke-width="1"/></svg>
<div class="t" style="left:57.6px;top:533px;;letter-spacing:-0.121px">$categories</div>
<svg style="left:41px;top:554px" width="9" height="9" viewBox="0 0 9 9"><rect x="0.5" y="0.5" width="8" height="8" fill="#fff" stroke="#808080"/><path d="M2 4.5 H7 M4.5 2 V7" stroke="#000" stroke-width="1"/></svg>
<div class="t" style="left:57.6px;top:551px;;letter-spacing:-0.220px">$in_list</div>
<div class="a" style="left:35px;top:613px;width:432px;height:17px;background:linear-gradient(#f1efe8,#fefefb)"></div>
<div class="a" style="left:37px;top:614px;width:15px;height:16px;background:linear-gradient(135deg,#cfdcfd,#b9cbf8);border:1px solid #fff;border-radius:3px;box-shadow:inset -1px -1px 0 #a6bcf2, inset 1px 1px 0 #dbe5fe"></div>
<svg style="left:37px;top:614px" width="15" height="16" viewBox="0 0 15 16"><path d="M9.0 4.5 L5.5 8.0 L9.0 11.5" fill="none" stroke="#4d6185" stroke-width="2"/></svg>
<div class="a" style="left:450px;top:614px;width:15px;height:16px;background:linear-gradient(135deg,#cfdcfd,#b9cbf8);border:1px solid #fff;border-radius:3px;box-shadow:inset -1px -1px 0 #a6bcf2, inset 1px 1px 0 #dbe5fe"></div>
<svg style="left:450px;top:614px" width="15" height="16" viewBox="0 0 15 16"><path d="M6.0 4.5 L9.5 8.0 L6.0 11.5" fill="none" stroke="#4d6185" stroke-width="2"/></svg>
<div class="a" style="left:54px;top:614px;width:269px;height:16px;background:linear-gradient(135deg,#cfdcfd,#b9cbf8);border:1px solid #fff;border-radius:3px;box-shadow:inset -1px -1px 0 #a6bcf2, inset 1px 1px 0 #dbe5fe"></div>
<div class="a" style="left:184px;top:619px;width:1px;height:6px;background:#eef3ff"></div>
<div class="a" style="left:185px;top:620px;width:1px;height:6px;background:#8ea4dc;opacity:.6"></div>
<div class="a" style="left:186px;top:619px;width:1px;height:6px;background:#eef3ff"></div>
<div class="a" style="left:187px;top:620px;width:1px;height:6px;background:#8ea4dc;opacity:.6"></div>
<div class="a" style="left:188px;top:619px;width:1px;height:6px;background:#eef3ff"></div>
<div class="a" style="left:189px;top:620px;width:1px;height:6px;background:#8ea4dc;opacity:.6"></div>
<div class="a" style="left:190px;top:619px;width:1px;height:6px;background:#eef3ff"></div>
<div class="a" style="left:191px;top:620px;width:1px;height:6px;background:#8ea4dc;opacity:.6"></div>
<div class="a" style="left:35px;top:631px;width:40px;height:20px;background:#f6f6f8"></div>
<div class="a" style="left:75px;top:632px;width:1px;height:18px;background:#d0d0de"></div>
<div class="a" style="left:121px;top:632px;width:1px;height:18px;background:#d0d0de"></div>
<div class="a" style="left:164px;top:632px;width:1px;height:18px;background:#d0d0de"></div>
<div class="a" style="left:226px;top:632px;width:1px;height:18px;background:#d0d0de"></div>
<div class="a" style="left:284px;top:632px;width:1px;height:18px;background:#d0d0de"></div>
<div class="t" style="left:40.6px;top:634px;color:#0a6acc;letter-spacing:-0.545px">Locals</div>
<div class="t" style="left:81.8px;top:634px;color:#1e1e1e;letter-spacing:-0.600px">Globals</div>
<div class="t" style="left:127.5px;top:634px;color:#1e1e1e;letter-spacing:0.030px">Watch</div>
<div class="t" style="left:170.6px;top:634px;color:#1e1e1e;letter-spacing:-0.278px">Immediate</div>
<div class="t" style="left:232.8px;top:634px;color:#1e1e1e;letter-spacing:-0.456px">Call Stack</div>
<div class="t" style="left:290.7px;top:634px;color:#1e1e1e;letter-spacing:-0.266px">Breakpoints</div>
<div class="t" style="left:477.7px;top:475.5px;;letter-spacing:-0.664px">Log</div>
<svg style="left:503px;top:479px" width="344" height="5" viewBox="0 0 344 5"><defs><pattern id="hg2" width="4" height="4" patternUnits="userSpaceOnUse"><rect x="0" y="0" width="1" height="1" fill="#8c8c90"/><rect x="2" y="2" width="1" height="1" fill="#8c8c90"/><rect x="1" y="1" width="1" height="1" fill="#fff" opacity=".7"/><rect x="3" y="3" width="1" height="1" fill="#fff" opacity=".7"/></pattern></defs><rect x="0" y="0" width="344" height="5" fill="url(#hg2)"/></svg>
<svg style="left:855px;top:479px" width="8" height="4" viewBox="0 0 8 4"><path d="M0 0 H8 L4 4 Z" fill="#1e1e1e"/></svg>
<svg style="left:872px;top:475px" width="7" height="11" viewBox="0 0 7 11"><path d="M1.5 0.5 H5.5 M2 0.5 V6 M5 0.5 V6 M0 6.5 H7 M3.5 6.5 V11" stroke="#1e1e1e" stroke-width="1" fill="none"/><rect x="4" y="1" width="1.5" height="5" fill="#1e1e1e"/></svg>
<svg style="left:888px;top:477px" width="10" height="9" viewBox="0 0 10 9"><path d="M1 0.5 L9 8.5 M9 0.5 L1 8.5" stroke="#1e1e1e" stroke-width="1.7"/></svg>
<div class="a" style="left:473px;top:492px;width:431px;height:140px;background:#fff"></div>
<div class="a" style="left:474px;top:493px;width:429px;height:17px;background:linear-gradient(#efecdd 0,#ece9d8 80%,#d8d2bd 95%,#cbc7b8 100%)"></div>
<div class="t" style="left:480px;top:495px;color:#000;letter-spacing:-0.246px">Type</div>
<div class="t" style="left:544.7px;top:495px;color:#000;letter-spacing:-0.699px">Time</div>
<div class="a" style="left:527px;top:496px;width:1px;height:12px;background:#c5c2b2"></div>
<div class="a" style="left:528px;top:496px;width:1px;height:12px;background:#fff"></div>
<div class="a" style="left:538px;top:496px;width:1px;height:12px;background:#c5c2b2"></div>
<div class="a" style="left:539px;top:496px;width:1px;height:12px;background:#fff"></div>
<div class="a" style="left:595px;top:496px;width:1px;height:12px;background:#c5c2b2"></div>
<div class="a" style="left:596px;top:496px;width:1px;height:12px;background:#fff"></div>
<div class="a" style="left:606px;top:496px;width:1px;height:12px;background:#c5c2b2"></div>
<div class="a" style="left:607px;top:496px;width:1px;height:12px;background:#fff"></div>
<div class="a" style="left:474px;top:510px;width:429px;height:121px;background:#fff;overflow:hidden"></div>
<div class="a" style="left:474px;top:510px;width:430px;height:121px;overflow:hidden">
<div class="t" style="left:7.5px;top:-4px;;letter-spacing:0.128px">Debu...</div>
<div class="t" style="left:73px;top:-4px;;letter-spacing:0.286px">10:32:...</div>
</div>
<div class="a" style="left:474px;top:510px;width:430px;height:121px;overflow:hidden">
<div class="t" style="left:7.5px;top:14px;;letter-spacing:-0.738px">IDE</div>
<div class="t" style="left:73px;top:14px;;letter-spacing:0.286px">10:32:...</div>
</div>
<div class="a" style="left:474px;top:510px;width:430px;height:121px;overflow:hidden">
<div class="t" style="left:7.5px;top:32px;;letter-spacing:0.128px">Debu...</div>
<div class="t" style="left:73px;top:32px;;letter-spacing:0.286px">10:32:...</div>
</div>
<div class="a" style="left:474px;top:510px;width:430px;height:121px;overflow:hidden">
<div class="t" style="left:7.5px;top:50px;;letter-spacing:0.128px">Debu...</div>
<div class="t" style="left:73px;top:50px;;letter-spacing:0.286px">10:32:...</div>
</div>
<div class="a" style="left:474px;top:510px;width:430px;height:121px;overflow:hidden">
<div class="t" style="left:7.5px;top:68px;;letter-spacing:-0.738px">IDE</div>
<div class="t" style="left:73px;top:68px;;letter-spacing:0.286px">10:32:...</div>
</div>
<div class="a" style="left:474px;top:510px;width:430px;height:121px;overflow:hidden">
<div class="t" style="left:7.5px;top:86px;;letter-spacing:-0.738px">IDE</div>
<div class="t" style="left:73px;top:86px;;letter-spacing:0.286px">10:32:...</div>
</div>
<div class="a" style="left:474px;top:510px;width:430px;height:121px;overflow:hidden">
<div class="t" style="left:7.5px;top:104px;;letter-spacing:0.128px">Debu...</div>
<div class="t" style="left:73px;top:104px;;letter-spacing:0.286px">10:32:...</div>
</div>
<div class="a" style="left:475px;top:521px;width:131px;height:1px;background-image:linear-gradient(90deg,#e0ddd0 50%,transparent 50%);background-size:2px 1px"></div>
<div class="a" style="left:475px;top:539px;width:131px;height:1px;background-image:linear-gradient(90deg,#e0ddd0 50%,transparent 50%);background-size:2px 1px"></div>
<div class="a" style="left:475px;top:557px;width:131px;height:1px;background-image:linear-gradient(90deg,#e0ddd0 50%,transparent 50%);background-size:2px 1px"></div>
<div class="a" style="left:475px;top:575px;width:131px;height:1px;background-image:linear-gradient(90deg,#e0ddd0 50%,transparent 50%);background-size:2px 1px"></div>
<div class="a" style="left:475px;top:593px;width:131px;height:1px;background-image:linear-gradient(90deg,#e0ddd0 50%,transparent 50%);background-size:2px 1px"></div>
<div class="a" style="left:475px;top:611px;width:131px;height:1px;background-image:linear-gradient(90deg,#e0ddd0 50%,transparent 50%);background-size:2px 1px"></div>
<div class="a" style="left:475px;top:629px;width:131px;height:1px;background-image:linear-gradient(90deg,#e0ddd0 50%,transparent 50%);background-size:2px 1px"></div>
<div class="a" style="left:528px;top:510px;width:1px;height:121px;background-image:linear-gradient(#e0ddd0 50%,transparent 50%);background-size:1px 2px"></div>
<div class="a" style="left:538px;top:510px;width:1px;height:121px;background-image:linear-gradient(#e0ddd0 50%,transparent 50%);background-size:1px 2px"></div>
<div class="a" style="left:596px;top:510px;width:1px;height:121px;background-image:linear-gradient(#e0ddd0 50%,transparent 50%);background-size:1px 2px"></div>
<div class="a" style="left:606px;top:510px;width:1px;height:121px;background-image:linear-gradient(#e0ddd0 50%,transparent 50%);background-size:1px 2px"></div>
<div class="a" style="left:886px;top:510px;width:17px;height:121px;background:linear-gradient(90deg,#f1efe8,#fefefb)"></div>
<div class="a" style="left:887px;top:510px;width:15px;height:16px;background:linear-gradient(135deg,#cfdcfd,#b9cbf8);border:1px solid #fff;border-radius:3px;box-shadow:inset -1px -1px 0 #a6bcf2, inset 1px 1px 0 #dbe5fe"></div>
<svg style="left:887px;top:510px" width="15" height="16" viewBox="0 0 15 16"><path d="M4.0 9.5 L7.5 6.0 L11.0 9.5" fill="none" stroke="#4d6185" stroke-width="2"/></svg>
<div class="a" style="left:887px;top:614px;width:15px;height:16px;background:linear-gradient(135deg,#cfdcfd,#b9cbf8);border:1px solid #fff;border-radius:3px;box-shadow:inset -1px -1px 0 #a6bcf2, inset 1px 1px 0 #dbe5fe"></div>
<svg style="left:887px;top:614px" width="15" height="16" viewBox="0 0 15 16"><path d="M4.0 6.5 L7.5 10.0 L11.0 6.5" fill="none" stroke="#4d6185" stroke-width="2"/></svg>
<div class="a" style="left:887px;top:605px;width:15px;height:8px;background:linear-gradient(135deg,#cfdcfd,#b9cbf8);border:1px solid #fff;border-radius:3px;box-shadow:inset -1px -1px 0 #a6bcf2, inset 1px 1px 0 #dbe5fe"></div>
<div class="a" style="left:560px;top:631px;width:28px;height:20px;background:#f6f6f8"></div>
<div class="a" style="left:513px;top:632px;width:1px;height:18px;background:#d0d0de"></div>
<div class="a" style="left:559px;top:632px;width:1px;height:18px;background:#d0d0de"></div>
<div class="a" style="left:588px;top:632px;width:1px;height:18px;background:#d0d0de"></div>
<div class="a" style="left:675px;top:632px;width:1px;height:18px;background:#d0d0de"></div>
<div class="t" style="left:478px;top:634px;color:#1e1e1e;letter-spacing:-0.101px">Errors</div>
<div class="t" style="left:519.5px;top:634px;color:#1e1e1e;letter-spacing:0.158px">Output</div>
<div class="t" style="left:565.7px;top:634px;color:#0a6acc;letter-spacing:-0.544px">Log</div>
<div class="t" style="left:594.5px;top:634px;color:#1e1e1e;letter-spacing:-0.393px">Debug Sessions</div>
<div class="t" style="left:682.2px;top:634px;color:#1e1e1e;letter-spacing:-0.111px">Transfers</div>
<div class="a" style="left:4px;top:657px;width:931px;height:20px;background:#007acc"></div>
<div class="a" style="left:0px;top:677px;width:939px;height:4px;background:linear-gradient(#0a48d8,#0034b0 60%,#001e8c)"></div>
<div class="t" style="left:422px;top:660.6px;color:#fff;letter-spacing:-0.047px">109:33</div>
<div class="t" style="left:481.9px;top:660.6px;color:#fff;letter-spacing:-0.404px">WINDOWS-1252</div>
<div class="t" style="left:578.2px;top:660.6px;color:#fff;letter-spacing:-1.330px">PHP</div>
<div class="t" style="left:646.6px;top:660.6px;color:#fff;letter-spacing:-0.766px">UNIX</div>
<div class="t" style="left:729.1px;top:660.6px;color:#fff;letter-spacing:-0.818px">INS</div>
<div class="t" style="left:766.9px;top:660.6px;color:#b9b29e;letter-spacing:-1.305px">CAPS</div>
<div class="t" style="left:809.7px;top:660.6px;color:#b9b29e;letter-spacing:-1.425px">NUM</div>
<div class="t" style="left:848.8px;top:660.6px;color:#b9b29e;letter-spacing:-1.584px">SCRL</div>
<svg style="left:922px;top:664px" width="12" height="12" viewBox="0 0 12 12"><rect x="0" y="10" width="1" height="1" fill="#9cc8ee"/><rect x="2" y="8" width="1" height="1" fill="#9cc8ee"/><rect x="2" y="10" width="1" height="1" fill="#9cc8ee"/><rect x="4" y="6" width="1" height="1" fill="#9cc8ee"/><rect x="4" y="8" width="1" height="1" fill="#9cc8ee"/><rect x="4" y="10" width="1" height="1" fill="#9cc8ee"/><rect x="6" y="4" width="1" height="1" fill="#9cc8ee"/><rect x="6" y="6" width="1" height="1" fill="#9cc8ee"/><rect x="6" y="8" width="1" height="1" fill="#9cc8ee"/><rect x="6" y="10" width="1" height="1" fill="#9cc8ee"/><rect x="8" y="2" width="1" height="1" fill="#9cc8ee"/><rect x="8" y="4" width="1" height="1" fill="#9cc8ee"/><rect x="8" y="6" width="1" height="1" fill="#9cc8ee"/><rect x="8" y="8" width="1" height="1" fill="#9cc8ee"/><rect x="8" y="10" width="1" height="1" fill="#9cc8ee"/><rect x="10" y="0" width="1" height="1" fill="#9cc8ee"/><rect x="10" y="2" width="1" height="1" fill="#9cc8ee"/><rect x="10" y="4" width="1" height="1" fill="#9cc8ee"/><rect x="10" y="6" width="1" height="1" fill="#9cc8ee"/><rect x="10" y="8" width="1" height="1" fill="#9cc8ee"/><rect x="10" y="10" width="1" height="1" fill="#9cc8ee"/></svg>
</body></html>
